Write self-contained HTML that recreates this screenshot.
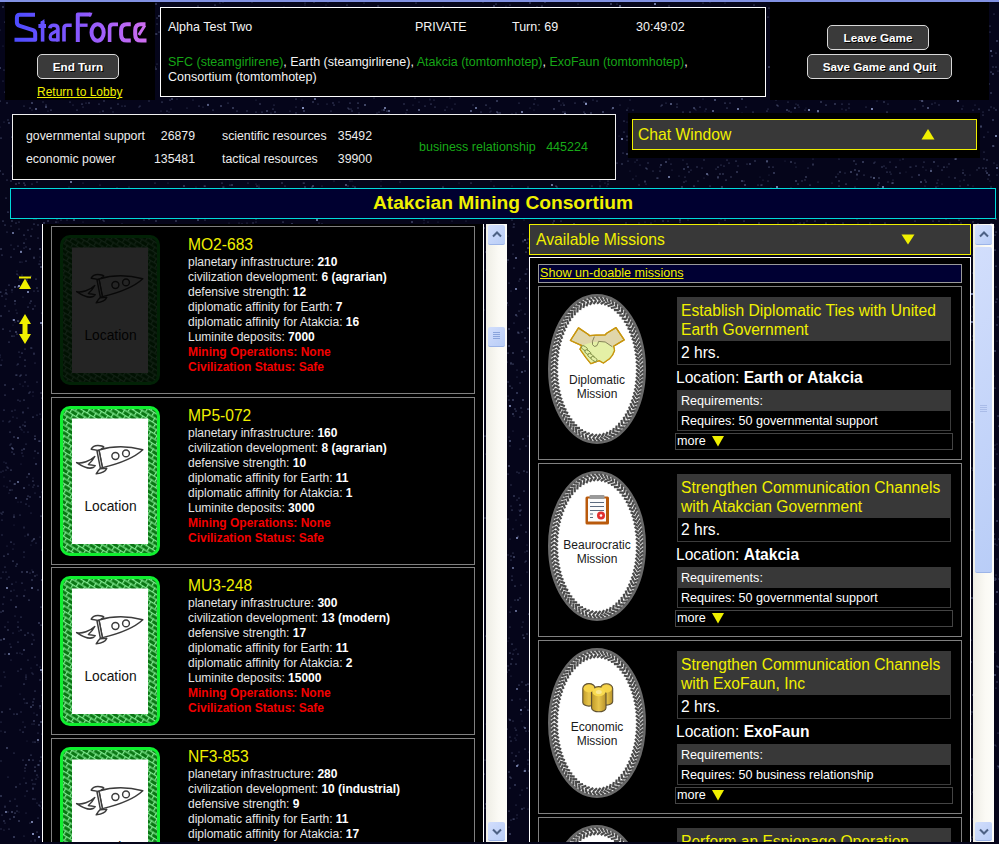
<!DOCTYPE html><html><head><meta charset="utf-8"><style>
*{box-sizing:border-box;margin:0;padding:0}
html,body{width:999px;height:844px;overflow:hidden;background:#05051a;font-family:"Liberation Sans",sans-serif;color:#fff}
.a{position:absolute;white-space:nowrap}
.blk{background:#000}
.topbar{left:0;top:0;width:999px;height:2px;background:#8191e3}
.btn{position:absolute;border:1px solid #d8d8d8;border-radius:5px;background:#3a3a3a;color:#fff;font-weight:bold;font-size:11.7px;text-align:center;text-shadow:1px 1px 0 #000}
.info{font-size:12.5px;color:#f4f4f4}
.g{color:#16a516}
.stat{font-size:12.3px;color:#ececec}
.sg{font-size:12.5px;color:#18aa18}
.yel{color:#f0f000}
.lp{font-size:12px;color:#e6e6e6;line-height:15px}
.lp b{color:#fff}
.lp .r{color:#f20000;font-weight:bold}
.frame{position:absolute;border:1px solid #808080;background:#000}
.sb{position:absolute;background:linear-gradient(90deg,#eeede5,#fbfaf5 60%,#fdfdf9)}
.sbb{position:absolute;width:17px;border-radius:2px;background:linear-gradient(135deg,#d2defc,#b9cdf7);border-bottom:1px solid #9cb4e8}
</style></head><body>

<svg width="0" height="0" style="position:absolute">
<defs>
<linearGradient id="lg" x1="14" y1="0" x2="147" y2="0" gradientUnits="userSpaceOnUse">
 <stop offset="0" stop-color="#4c4cff"/><stop offset="0.5" stop-color="#8a58ff"/><stop offset="1" stop-color="#d06ef0"/>
</linearGradient>
<pattern id="chev" width="7.5" height="9" patternUnits="userSpaceOnUse" patternTransform="rotate(32)">
 <rect width="7.5" height="9" fill="#0a7614"/><rect y="0" width="7.5" height="1.2" fill="#80ea90"/><rect y="4.5" width="7.5" height="1.2" fill="#80ea90"/><rect x="0" y="0" width="1.2" height="4.5" fill="#80ea90"/><rect x="3.75" y="4.5" width="1.2" height="4.5" fill="#80ea90"/>
</pattern>
<pattern id="gdash" width="6.6" height="7.6" patternUnits="userSpaceOnUse" patternTransform="rotate(50)">
 <rect width="6.6" height="7.6" fill="#484848"/><rect y="0" width="6.6" height="1.6" fill="#fff"/><rect y="3.8" width="6.6" height="1.6" fill="#fff"/><rect x="0" y="0" width="1.6" height="3.8" fill="#fff"/><rect x="3.3" y="3.8" width="1.6" height="3.8" fill="#fff"/>
</pattern>
<symbol id="rocket" viewBox="0 0 100 150">
 <g fill="#fff" stroke="#3c3c3c" stroke-width="1.45" stroke-linejoin="round">
  <path d="M16.6,56.6 C22,58 30,55 34.8,50.5 C33,54 30,57 28.4,58.5 C31,59 33.5,59.2 35.2,59.7 C33,63 27,63.5 16.6,56.6Z"/>
  <path d="M31.2,43.2 Q33.2,39.4 38,39.5 Q42.6,39.7 43.8,41 L39.4,44.6 Z"/>
  <path d="M36.2,67.8 Q38.6,63.8 40.2,62.7 L46.8,62.2 Q45.2,66.8 36.2,67.8 Z"/>
  <path d="M39,44.1 C52,40 66,39.5 82.8,43.7 C75,51 62,57 42.4,61.6 Z"/>
  <path d="M37,45 L39,44.1 L42.4,61.6 L40.4,62.4 Z"/>
  <circle cx="55.4" cy="49.9" r="3.5"/><circle cx="66" cy="47.4" r="3.4"/>
 </g>
</symbol>
<symbol id="card" viewBox="0 0 100 150">
 <rect x="1.5" y="1.5" width="97" height="147" rx="8.5" fill="url(#chev)" stroke="#10f030" stroke-width="3"/>
 <rect x="12" y="12.5" width="76" height="125.5" fill="#fff"/>
 <use href="#rocket" x="0" y="0" width="100" height="150"/>
 <text x="50.5" y="104.5" text-anchor="middle" font-family="Liberation Sans" font-size="13.8" fill="#111">Location</text>
</symbol>
<symbol id="oval" viewBox="0 0 98 150">
 <ellipse cx="49" cy="75" rx="47.5" ry="73.5" fill="#fff" stroke="#6a6a6a" stroke-width="3"/>
 <g fill="#4a4a4a"><rect x="-2.5" y="-1.1" width="5" height="2.2" transform="translate(93.6 75.0) rotate(135)"/><rect x="-2.5" y="-1.1" width="5" height="2.2" transform="translate(93.5 79.0) rotate(137)"/><rect x="-2.5" y="-1.1" width="5" height="2.2" transform="translate(93.3 83.0) rotate(139)"/><rect x="-2.5" y="-1.1" width="5" height="2.2" transform="translate(93.0 86.8) rotate(141)"/><rect x="-2.5" y="-1.1" width="5" height="2.2" transform="translate(92.5 90.7) rotate(143)"/><rect x="-2.5" y="-1.1" width="5" height="2.2" transform="translate(91.8 94.7) rotate(145)"/><rect x="-2.5" y="-1.1" width="5" height="2.2" transform="translate(91.1 98.5) rotate(148)"/><rect x="-2.5" y="-1.1" width="5" height="2.2" transform="translate(90.1 102.3) rotate(150)"/><rect x="-2.5" y="-1.1" width="5" height="2.2" transform="translate(89.0 106.2) rotate(152)"/><rect x="-2.5" y="-1.1" width="5" height="2.2" transform="translate(87.8 109.9) rotate(155)"/><rect x="-2.5" y="-1.1" width="5" height="2.2" transform="translate(86.4 113.6) rotate(157)"/><rect x="-2.5" y="-1.1" width="5" height="2.2" transform="translate(84.8 117.1) rotate(160)"/><rect x="-2.5" y="-1.1" width="5" height="2.2" transform="translate(83.0 120.7) rotate(163)"/><rect x="-2.5" y="-1.1" width="5" height="2.2" transform="translate(81.1 124.1) rotate(166)"/><rect x="-2.5" y="-1.1" width="5" height="2.2" transform="translate(78.9 127.4) rotate(170)"/><rect x="-2.5" y="-1.1" width="5" height="2.2" transform="translate(76.6 130.5) rotate(174)"/><rect x="-2.5" y="-1.1" width="5" height="2.2" transform="translate(74.0 133.5) rotate(178)"/><rect x="-2.5" y="-1.1" width="5" height="2.2" transform="translate(71.2 136.3) rotate(183)"/><rect x="-2.5" y="-1.1" width="5" height="2.2" transform="translate(68.1 138.8) rotate(188)"/><rect x="-2.5" y="-1.1" width="5" height="2.2" transform="translate(64.9 141.0) rotate(194)"/><rect x="-2.5" y="-1.1" width="5" height="2.2" transform="translate(61.4 142.8) rotate(200)"/><rect x="-2.5" y="-1.1" width="5" height="2.2" transform="translate(57.7 144.2) rotate(208)"/><rect x="-2.5" y="-1.1" width="5" height="2.2" transform="translate(53.9 145.2) rotate(215)"/><rect x="-2.5" y="-1.1" width="5" height="2.2" transform="translate(50.0 145.6) rotate(223)"/><rect x="-2.5" y="-1.1" width="5" height="2.2" transform="translate(46.1 145.4) rotate(-129)"/><rect x="-2.5" y="-1.1" width="5" height="2.2" transform="translate(42.2 144.8) rotate(-121)"/><rect x="-2.5" y="-1.1" width="5" height="2.2" transform="translate(38.4 143.6) rotate(-114)"/><rect x="-2.5" y="-1.1" width="5" height="2.2" transform="translate(34.8 141.9) rotate(-107)"/><rect x="-2.5" y="-1.1" width="5" height="2.2" transform="translate(31.5 139.9) rotate(-101)"/><rect x="-2.5" y="-1.1" width="5" height="2.2" transform="translate(28.3 137.5) rotate(-95)"/><rect x="-2.5" y="-1.1" width="5" height="2.2" transform="translate(25.4 134.9) rotate(-90)"/><rect x="-2.5" y="-1.1" width="5" height="2.2" transform="translate(22.7 132.0) rotate(-86)"/><rect x="-2.5" y="-1.1" width="5" height="2.2" transform="translate(20.2 129.0) rotate(-82)"/><rect x="-2.5" y="-1.1" width="5" height="2.2" transform="translate(18.0 125.7) rotate(-78)"/><rect x="-2.5" y="-1.1" width="5" height="2.2" transform="translate(15.9 122.4) rotate(-75)"/><rect x="-2.5" y="-1.1" width="5" height="2.2" transform="translate(14.1 118.9) rotate(-72)"/><rect x="-2.5" y="-1.1" width="5" height="2.2" transform="translate(12.4 115.3) rotate(-69)"/><rect x="-2.5" y="-1.1" width="5" height="2.2" transform="translate(10.9 111.7) rotate(-66)"/><rect x="-2.5" y="-1.1" width="5" height="2.2" transform="translate(9.6 107.9) rotate(-63)"/><rect x="-2.5" y="-1.1" width="5" height="2.2" transform="translate(8.4 104.2) rotate(-61)"/><rect x="-2.5" y="-1.1" width="5" height="2.2" transform="translate(7.4 100.4) rotate(-59)"/><rect x="-2.5" y="-1.1" width="5" height="2.2" transform="translate(6.5 96.5) rotate(-56)"/><rect x="-2.5" y="-1.1" width="5" height="2.2" transform="translate(5.8 92.7) rotate(-54)"/><rect x="-2.5" y="-1.1" width="5" height="2.2" transform="translate(5.3 88.8) rotate(-52)"/><rect x="-2.5" y="-1.1" width="5" height="2.2" transform="translate(4.8 84.8) rotate(-50)"/><rect x="-2.5" y="-1.1" width="5" height="2.2" transform="translate(4.6 80.9) rotate(-48)"/><rect x="-2.5" y="-1.1" width="5" height="2.2" transform="translate(4.4 77.0) rotate(-46)"/><rect x="-2.5" y="-1.1" width="5" height="2.2" transform="translate(4.4 73.0) rotate(-44)"/><rect x="-2.5" y="-1.1" width="5" height="2.2" transform="translate(4.6 69.1) rotate(-42)"/><rect x="-2.5" y="-1.1" width="5" height="2.2" transform="translate(4.8 65.2) rotate(-40)"/><rect x="-2.5" y="-1.1" width="5" height="2.2" transform="translate(5.3 61.2) rotate(-38)"/><rect x="-2.5" y="-1.1" width="5" height="2.2" transform="translate(5.8 57.3) rotate(-36)"/><rect x="-2.5" y="-1.1" width="5" height="2.2" transform="translate(6.5 53.5) rotate(-34)"/><rect x="-2.5" y="-1.1" width="5" height="2.2" transform="translate(7.4 49.6) rotate(-31)"/><rect x="-2.5" y="-1.1" width="5" height="2.2" transform="translate(8.4 45.8) rotate(-29)"/><rect x="-2.5" y="-1.1" width="5" height="2.2" transform="translate(9.6 42.1) rotate(-27)"/><rect x="-2.5" y="-1.1" width="5" height="2.2" transform="translate(10.9 38.3) rotate(-24)"/><rect x="-2.5" y="-1.1" width="5" height="2.2" transform="translate(12.4 34.7) rotate(-21)"/><rect x="-2.5" y="-1.1" width="5" height="2.2" transform="translate(14.1 31.1) rotate(-18)"/><rect x="-2.5" y="-1.1" width="5" height="2.2" transform="translate(15.9 27.6) rotate(-15)"/><rect x="-2.5" y="-1.1" width="5" height="2.2" transform="translate(18.0 24.3) rotate(-12)"/><rect x="-2.5" y="-1.1" width="5" height="2.2" transform="translate(20.2 21.1) rotate(-8)"/><rect x="-2.5" y="-1.1" width="5" height="2.2" transform="translate(22.7 18.0) rotate(-4)"/><rect x="-2.5" y="-1.1" width="5" height="2.2" transform="translate(25.3 15.2) rotate(0)"/><rect x="-2.5" y="-1.1" width="5" height="2.2" transform="translate(28.3 12.5) rotate(5)"/><rect x="-2.5" y="-1.1" width="5" height="2.2" transform="translate(31.4 10.1) rotate(11)"/><rect x="-2.5" y="-1.1" width="5" height="2.2" transform="translate(34.8 8.1) rotate(17)"/><rect x="-2.5" y="-1.1" width="5" height="2.2" transform="translate(38.4 6.4) rotate(24)"/><rect x="-2.5" y="-1.1" width="5" height="2.2" transform="translate(42.1 5.3) rotate(31)"/><rect x="-2.5" y="-1.1" width="5" height="2.2" transform="translate(46.0 4.6) rotate(39)"/><rect x="-2.5" y="-1.1" width="5" height="2.2" transform="translate(49.9 4.4) rotate(47)"/><rect x="-2.5" y="-1.1" width="5" height="2.2" transform="translate(53.8 4.8) rotate(55)"/><rect x="-2.5" y="-1.1" width="5" height="2.2" transform="translate(57.7 5.8) rotate(62)"/><rect x="-2.5" y="-1.1" width="5" height="2.2" transform="translate(61.4 7.2) rotate(70)"/><rect x="-2.5" y="-1.1" width="5" height="2.2" transform="translate(64.8 9.0) rotate(76)"/><rect x="-2.5" y="-1.1" width="5" height="2.2" transform="translate(68.1 11.2) rotate(82)"/><rect x="-2.5" y="-1.1" width="5" height="2.2" transform="translate(71.2 13.7) rotate(87)"/><rect x="-2.5" y="-1.1" width="5" height="2.2" transform="translate(74.0 16.5) rotate(92)"/><rect x="-2.5" y="-1.1" width="5" height="2.2" transform="translate(76.6 19.5) rotate(96)"/><rect x="-2.5" y="-1.1" width="5" height="2.2" transform="translate(78.9 22.6) rotate(100)"/><rect x="-2.5" y="-1.1" width="5" height="2.2" transform="translate(81.0 25.9) rotate(104)"/><rect x="-2.5" y="-1.1" width="5" height="2.2" transform="translate(83.0 29.3) rotate(107)"/><rect x="-2.5" y="-1.1" width="5" height="2.2" transform="translate(84.8 32.9) rotate(110)"/><rect x="-2.5" y="-1.1" width="5" height="2.2" transform="translate(86.4 36.4) rotate(113)"/><rect x="-2.5" y="-1.1" width="5" height="2.2" transform="translate(87.8 40.1) rotate(115)"/><rect x="-2.5" y="-1.1" width="5" height="2.2" transform="translate(89.0 43.8) rotate(118)"/><rect x="-2.5" y="-1.1" width="5" height="2.2" transform="translate(90.1 47.7) rotate(120)"/><rect x="-2.5" y="-1.1" width="5" height="2.2" transform="translate(91.1 51.5) rotate(122)"/><rect x="-2.5" y="-1.1" width="5" height="2.2" transform="translate(91.8 55.3) rotate(125)"/><rect x="-2.5" y="-1.1" width="5" height="2.2" transform="translate(92.5 59.3) rotate(127)"/><rect x="-2.5" y="-1.1" width="5" height="2.2" transform="translate(93.0 63.2) rotate(129)"/><rect x="-2.5" y="-1.1" width="5" height="2.2" transform="translate(93.3 67.0) rotate(131)"/><rect x="-2.5" y="-1.1" width="5" height="2.2" transform="translate(93.5 71.0) rotate(133)"/><rect x="-2.5" y="-1.1" width="5" height="2.2" transform="translate(90.0 77.0) rotate(46)"/><rect x="-2.5" y="-1.1" width="5" height="2.2" transform="translate(89.8 80.9) rotate(48)"/><rect x="-2.5" y="-1.1" width="5" height="2.2" transform="translate(89.6 84.9) rotate(50)"/><rect x="-2.5" y="-1.1" width="5" height="2.2" transform="translate(89.1 88.7) rotate(52)"/><rect x="-2.5" y="-1.1" width="5" height="2.2" transform="translate(88.6 92.6) rotate(54)"/><rect x="-2.5" y="-1.1" width="5" height="2.2" transform="translate(87.9 96.4) rotate(57)"/><rect x="-2.5" y="-1.1" width="5" height="2.2" transform="translate(87.0 100.3) rotate(59)"/><rect x="-2.5" y="-1.1" width="5" height="2.2" transform="translate(86.0 104.0) rotate(61)"/><rect x="-2.5" y="-1.1" width="5" height="2.2" transform="translate(84.8 107.7) rotate(64)"/><rect x="-2.5" y="-1.1" width="5" height="2.2" transform="translate(83.4 111.4) rotate(67)"/><rect x="-2.5" y="-1.1" width="5" height="2.2" transform="translate(81.9 115.0) rotate(69)"/><rect x="-2.5" y="-1.1" width="5" height="2.2" transform="translate(80.2 118.5) rotate(73)"/><rect x="-2.5" y="-1.1" width="5" height="2.2" transform="translate(78.3 121.9) rotate(76)"/><rect x="-2.5" y="-1.1" width="5" height="2.2" transform="translate(76.2 125.2) rotate(80)"/><rect x="-2.5" y="-1.1" width="5" height="2.2" transform="translate(73.8 128.3) rotate(84)"/><rect x="-2.5" y="-1.1" width="5" height="2.2" transform="translate(71.2 131.3) rotate(88)"/><rect x="-2.5" y="-1.1" width="5" height="2.2" transform="translate(68.4 134.0) rotate(94)"/><rect x="-2.5" y="-1.1" width="5" height="2.2" transform="translate(65.4 136.4) rotate(100)"/><rect x="-2.5" y="-1.1" width="5" height="2.2" transform="translate(62.1 138.5) rotate(106)"/><rect x="-2.5" y="-1.1" width="5" height="2.2" transform="translate(58.5 140.2) rotate(114)"/><rect x="-2.5" y="-1.1" width="5" height="2.2" transform="translate(54.8 141.3) rotate(122)"/><rect x="-2.5" y="-1.1" width="5" height="2.2" transform="translate(50.9 141.9) rotate(131)"/><rect x="-2.5" y="-1.1" width="5" height="2.2" transform="translate(47.1 141.9) rotate(-221)"/><rect x="-2.5" y="-1.1" width="5" height="2.2" transform="translate(43.2 141.3) rotate(-212)"/><rect x="-2.5" y="-1.1" width="5" height="2.2" transform="translate(39.4 140.1) rotate(-204)"/><rect x="-2.5" y="-1.1" width="5" height="2.2" transform="translate(35.9 138.5) rotate(-196)"/><rect x="-2.5" y="-1.1" width="5" height="2.2" transform="translate(32.6 136.4) rotate(-190)"/><rect x="-2.5" y="-1.1" width="5" height="2.2" transform="translate(29.5 134.0) rotate(-184)"/><rect x="-2.5" y="-1.1" width="5" height="2.2" transform="translate(26.7 131.2) rotate(-178)"/><rect x="-2.5" y="-1.1" width="5" height="2.2" transform="translate(24.2 128.3) rotate(-174)"/><rect x="-2.5" y="-1.1" width="5" height="2.2" transform="translate(21.8 125.2) rotate(-170)"/><rect x="-2.5" y="-1.1" width="5" height="2.2" transform="translate(19.7 121.9) rotate(-166)"/><rect x="-2.5" y="-1.1" width="5" height="2.2" transform="translate(17.8 118.4) rotate(-163)"/><rect x="-2.5" y="-1.1" width="5" height="2.2" transform="translate(16.1 115.0) rotate(-159)"/><rect x="-2.5" y="-1.1" width="5" height="2.2" transform="translate(14.6 111.3) rotate(-157)"/><rect x="-2.5" y="-1.1" width="5" height="2.2" transform="translate(13.2 107.6) rotate(-154)"/><rect x="-2.5" y="-1.1" width="5" height="2.2" transform="translate(12.0 103.9) rotate(-151)"/><rect x="-2.5" y="-1.1" width="5" height="2.2" transform="translate(11.0 100.2) rotate(-149)"/><rect x="-2.5" y="-1.1" width="5" height="2.2" transform="translate(10.1 96.4) rotate(-147)"/><rect x="-2.5" y="-1.1" width="5" height="2.2" transform="translate(9.4 92.5) rotate(-144)"/><rect x="-2.5" y="-1.1" width="5" height="2.2" transform="translate(8.9 88.7) rotate(-142)"/><rect x="-2.5" y="-1.1" width="5" height="2.2" transform="translate(8.4 84.8) rotate(-140)"/><rect x="-2.5" y="-1.1" width="5" height="2.2" transform="translate(8.2 80.9) rotate(-138)"/><rect x="-2.5" y="-1.1" width="5" height="2.2" transform="translate(8.0 77.0) rotate(-136)"/><rect x="-2.5" y="-1.1" width="5" height="2.2" transform="translate(8.0 73.0) rotate(-134)"/><rect x="-2.5" y="-1.1" width="5" height="2.2" transform="translate(8.2 69.1) rotate(-132)"/><rect x="-2.5" y="-1.1" width="5" height="2.2" transform="translate(8.4 65.2) rotate(-130)"/><rect x="-2.5" y="-1.1" width="5" height="2.2" transform="translate(8.9 61.3) rotate(-128)"/><rect x="-2.5" y="-1.1" width="5" height="2.2" transform="translate(9.4 57.5) rotate(-126)"/><rect x="-2.5" y="-1.1" width="5" height="2.2" transform="translate(10.1 53.6) rotate(-123)"/><rect x="-2.5" y="-1.1" width="5" height="2.2" transform="translate(11.0 49.8) rotate(-121)"/><rect x="-2.5" y="-1.1" width="5" height="2.2" transform="translate(12.0 46.1) rotate(-119)"/><rect x="-2.5" y="-1.1" width="5" height="2.2" transform="translate(13.2 42.4) rotate(-116)"/><rect x="-2.5" y="-1.1" width="5" height="2.2" transform="translate(14.6 38.7) rotate(-113)"/><rect x="-2.5" y="-1.1" width="5" height="2.2" transform="translate(16.1 35.0) rotate(-111)"/><rect x="-2.5" y="-1.1" width="5" height="2.2" transform="translate(17.8 31.6) rotate(-107)"/><rect x="-2.5" y="-1.1" width="5" height="2.2" transform="translate(19.7 28.1) rotate(-104)"/><rect x="-2.5" y="-1.1" width="5" height="2.2" transform="translate(21.8 24.8) rotate(-100)"/><rect x="-2.5" y="-1.1" width="5" height="2.2" transform="translate(24.1 21.7) rotate(-96)"/><rect x="-2.5" y="-1.1" width="5" height="2.2" transform="translate(26.7 18.8) rotate(-92)"/><rect x="-2.5" y="-1.1" width="5" height="2.2" transform="translate(29.5 16.0) rotate(-86)"/><rect x="-2.5" y="-1.1" width="5" height="2.2" transform="translate(32.6 13.6) rotate(-80)"/><rect x="-2.5" y="-1.1" width="5" height="2.2" transform="translate(35.9 11.5) rotate(-74)"/><rect x="-2.5" y="-1.1" width="5" height="2.2" transform="translate(39.4 9.9) rotate(-66)"/><rect x="-2.5" y="-1.1" width="5" height="2.2" transform="translate(43.2 8.7) rotate(-58)"/><rect x="-2.5" y="-1.1" width="5" height="2.2" transform="translate(47.0 8.1) rotate(-50)"/><rect x="-2.5" y="-1.1" width="5" height="2.2" transform="translate(50.9 8.1) rotate(-41)"/><rect x="-2.5" y="-1.1" width="5" height="2.2" transform="translate(54.8 8.7) rotate(-32)"/><rect x="-2.5" y="-1.1" width="5" height="2.2" transform="translate(58.5 9.8) rotate(-24)"/><rect x="-2.5" y="-1.1" width="5" height="2.2" transform="translate(62.0 11.5) rotate(-16)"/><rect x="-2.5" y="-1.1" width="5" height="2.2" transform="translate(65.3 13.6) rotate(-10)"/><rect x="-2.5" y="-1.1" width="5" height="2.2" transform="translate(68.4 16.0) rotate(-4)"/><rect x="-2.5" y="-1.1" width="5" height="2.2" transform="translate(71.2 18.7) rotate(2)"/><rect x="-2.5" y="-1.1" width="5" height="2.2" transform="translate(73.8 21.7) rotate(6)"/><rect x="-2.5" y="-1.1" width="5" height="2.2" transform="translate(76.2 24.8) rotate(10)"/><rect x="-2.5" y="-1.1" width="5" height="2.2" transform="translate(78.3 28.1) rotate(14)"/><rect x="-2.5" y="-1.1" width="5" height="2.2" transform="translate(80.2 31.5) rotate(17)"/><rect x="-2.5" y="-1.1" width="5" height="2.2" transform="translate(81.9 35.0) rotate(21)"/><rect x="-2.5" y="-1.1" width="5" height="2.2" transform="translate(83.4 38.6) rotate(23)"/><rect x="-2.5" y="-1.1" width="5" height="2.2" transform="translate(84.8 42.3) rotate(26)"/><rect x="-2.5" y="-1.1" width="5" height="2.2" transform="translate(86.0 46.0) rotate(29)"/><rect x="-2.5" y="-1.1" width="5" height="2.2" transform="translate(87.0 49.7) rotate(31)"/><rect x="-2.5" y="-1.1" width="5" height="2.2" transform="translate(87.9 53.6) rotate(33)"/><rect x="-2.5" y="-1.1" width="5" height="2.2" transform="translate(88.6 57.4) rotate(36)"/><rect x="-2.5" y="-1.1" width="5" height="2.2" transform="translate(89.1 61.3) rotate(38)"/><rect x="-2.5" y="-1.1" width="5" height="2.2" transform="translate(89.6 65.1) rotate(40)"/><rect x="-2.5" y="-1.1" width="5" height="2.2" transform="translate(89.8 69.1) rotate(42)"/><rect x="-2.5" y="-1.1" width="5" height="2.2" transform="translate(90.0 73.0) rotate(44)"/></g>
</symbol>
</defs>
</svg>

<svg width="999" height="844" viewBox="0 0 999 844" style="position:absolute;left:0;top:0" fill="#b8c8ff"><circle cx="29" cy="393" r="0.5" fill-opacity="0.7"/><circle cx="871" cy="177" r="0.55" fill-opacity="0.69"/><circle cx="3" cy="572" r="0.6" fill-opacity="0.43"/><circle cx="512" cy="753" r="0.7" fill-opacity="0.3"/><circle cx="996" cy="136" r="1" fill-opacity="0.79"/><circle cx="33" cy="417" r="0.55" fill-opacity="0.74"/><circle cx="563" cy="112" r="0.7" fill-opacity="0.3"/><circle cx="453" cy="843" r="0.7" fill-opacity="0.73"/><circle cx="34" cy="258" r="0.6" fill-opacity="0.67"/><circle cx="979" cy="168" r="0.7" fill-opacity="0.39"/><circle cx="623" cy="153" r="0.55" fill-opacity="0.57"/><circle cx="42" cy="398" r="0.5" fill-opacity="0.7"/><circle cx="351" cy="109" r="0.6" fill-opacity="0.48"/><circle cx="24" cy="557" r="0.55" fill-opacity="0.4"/><circle cx="13" cy="449" r="0.7" fill-opacity="0.64"/><circle cx="997" cy="592" r="0.8" fill-opacity="0.68"/><circle cx="516" cy="113" r="0.6" fill-opacity="0.48"/><circle cx="389" cy="111" r="0.9" fill-opacity="0.63"/><circle cx="517" cy="500" r="0.55" fill-opacity="0.45"/><circle cx="32" cy="780" r="0.5" fill-opacity="0.59"/><circle cx="973" cy="307" r="0.7" fill-opacity="0.43"/><circle cx="33" cy="705" r="0.6" fill-opacity="0.72"/><circle cx="949" cy="164" r="0.7" fill-opacity="0.34"/><circle cx="984" cy="137" r="0.55" fill-opacity="0.56"/><circle cx="522" cy="112" r="0.9" fill-opacity="0.84"/><circle cx="891" cy="844" r="0.55" fill-opacity="0.41"/><circle cx="382" cy="110" r="0.55" fill-opacity="0.32"/><circle cx="34" cy="458" r="0.5" fill-opacity="0.26"/><circle cx="51" cy="110" r="0.6" fill-opacity="0.72"/><circle cx="33" cy="487" r="0.6" fill-opacity="0.45"/><circle cx="10" cy="432" r="0.55" fill-opacity="0.66"/><circle cx="22" cy="572" r="0.7" fill-opacity="0.5"/><circle cx="769" cy="175" r="0.5" fill-opacity="0.29"/><circle cx="516" cy="756" r="0.7" fill-opacity="0.45"/><circle cx="3" cy="329" r="0.55" fill-opacity="0.71"/><circle cx="528" cy="764" r="0.6" fill-opacity="0.29"/><circle cx="813" cy="165" r="0.55" fill-opacity="0.48"/><circle cx="296" cy="99" r="0.6" fill-opacity="0.63"/><circle cx="452" cy="109" r="0.55" fill-opacity="0.43"/><circle cx="24" cy="650" r="0.7" fill-opacity="0.71"/><circle cx="378" cy="843" r="0.6" fill-opacity="0.32"/><circle cx="971" cy="839" r="0.7" fill-opacity="0.35"/><circle cx="2" cy="535" r="0.7" fill-opacity="0.29"/><circle cx="334" cy="181" r="0.5" fill-opacity="0.39"/><circle cx="13" cy="325" r="0.5" fill-opacity="0.25"/><circle cx="21" cy="251" r="0.5" fill-opacity="0.71"/><circle cx="528" cy="328" r="0.6" fill-opacity="0.66"/><circle cx="4" cy="477" r="0.5" fill-opacity="0.28"/><circle cx="40" cy="497" r="0.7" fill-opacity="0.56"/><circle cx="1" cy="640" r="0.7" fill-opacity="0.48"/><circle cx="155" cy="183" r="0.55" fill-opacity="0.48"/><circle cx="518" cy="333" r="0.7" fill-opacity="0.33"/><circle cx="516" cy="411" r="0.5" fill-opacity="0.73"/><circle cx="971" cy="324" r="0.6" fill-opacity="0.3"/><circle cx="337" cy="843" r="0.5" fill-opacity="0.4"/><circle cx="27" cy="477" r="0.5" fill-opacity="0.59"/><circle cx="24" cy="488" r="0.7" fill-opacity="0.69"/><circle cx="521" cy="510" r="0.5" fill-opacity="0.69"/><circle cx="1" cy="796" r="0.7" fill-opacity="0.58"/><circle cx="61" cy="220" r="0.55" fill-opacity="0.46"/><circle cx="851" cy="172" r="0.7" fill-opacity="0.74"/><circle cx="220" cy="3" r="0.6" fill-opacity="0.34"/><circle cx="627" cy="154" r="0.7" fill-opacity="0.72"/><circle cx="885" cy="223" r="0.6" fill-opacity="0.55"/><circle cx="677" cy="104" r="0.5" fill-opacity="0.63"/><circle cx="879" cy="183" r="0.7" fill-opacity="0.39"/><circle cx="510" cy="720" r="0.7" fill-opacity="0.67"/><circle cx="996" cy="110" r="0.7" fill-opacity="0.43"/><circle cx="9" cy="577" r="0.55" fill-opacity="0.56"/><circle cx="35" cy="691" r="0.55" fill-opacity="0.6"/><circle cx="942" cy="184" r="0.5" fill-opacity="0.39"/><circle cx="36" cy="219" r="0.5" fill-opacity="0.62"/><circle cx="7" cy="588" r="0.9" fill-opacity="0.78"/><circle cx="646" cy="184" r="0.55" fill-opacity="0.35"/><circle cx="920" cy="100" r="0.7" fill-opacity="0.36"/><circle cx="710" cy="186" r="0.5" fill-opacity="0.64"/><circle cx="0" cy="101" r="0.6" fill-opacity="0.39"/><circle cx="525" cy="330" r="0.5" fill-opacity="0.25"/><circle cx="520" cy="383" r="0.7" fill-opacity="0.3"/><circle cx="991" cy="93" r="0.7" fill-opacity="0.51"/><circle cx="521" cy="310" r="0.5" fill-opacity="0.26"/><circle cx="517" cy="735" r="0.6" fill-opacity="0.37"/><circle cx="516" cy="315" r="0.7" fill-opacity="0.67"/><circle cx="114" cy="843" r="0.7" fill-opacity="0.31"/><circle cx="37" cy="803" r="0.6" fill-opacity="0.33"/><circle cx="26" cy="675" r="0.5" fill-opacity="0.46"/><circle cx="157" cy="18" r="0.6" fill-opacity="0.6"/><circle cx="525" cy="562" r="0.6" fill-opacity="0.39"/><circle cx="322" cy="224" r="0.6" fill-opacity="0.58"/><circle cx="655" cy="221" r="0.5" fill-opacity="0.29"/><circle cx="359" cy="113" r="0.5" fill-opacity="0.49"/><circle cx="575" cy="103" r="0.55" fill-opacity="0.54"/><circle cx="349" cy="109" r="0.55" fill-opacity="0.63"/><circle cx="387" cy="111" r="0.55" fill-opacity="0.7"/><circle cx="484" cy="310" r="0.7" fill-opacity="0.26"/><circle cx="33" cy="635" r="0.6" fill-opacity="0.54"/><circle cx="998" cy="71" r="0.6" fill-opacity="0.38"/><circle cx="592" cy="186" r="0.55" fill-opacity="0.55"/><circle cx="1" cy="316" r="0.7" fill-opacity="0.5"/><circle cx="22" cy="275" r="0.5" fill-opacity="0.49"/><circle cx="19" cy="631" r="0.55" fill-opacity="0.32"/><circle cx="915" cy="221" r="0.5" fill-opacity="0.6"/><circle cx="995" cy="675" r="0.7" fill-opacity="0.73"/><circle cx="122" cy="106" r="0.6" fill-opacity="0.38"/><circle cx="5" cy="395" r="0.6" fill-opacity="0.59"/><circle cx="998" cy="667" r="0.7" fill-opacity="0.44"/><circle cx="769" cy="67" r="0.7" fill-opacity="0.66"/><circle cx="997" cy="165" r="0.55" fill-opacity="0.38"/><circle cx="915" cy="109" r="0.6" fill-opacity="0.64"/><circle cx="680" cy="220" r="0.7" fill-opacity="0.61"/><circle cx="526" cy="731" r="0.6" fill-opacity="0.55"/><circle cx="1" cy="249" r="0.7" fill-opacity="0.56"/><circle cx="924" cy="162" r="0.6" fill-opacity="0.5"/><circle cx="995" cy="351" r="0.7" fill-opacity="0.68"/><circle cx="497" cy="112" r="0.7" fill-opacity="0.59"/><circle cx="507" cy="362" r="0.5" fill-opacity="0.59"/><circle cx="18" cy="287" r="0.7" fill-opacity="0.52"/><circle cx="694" cy="186" r="0.55" fill-opacity="0.75"/><circle cx="32" cy="541" r="0.6" fill-opacity="0.5"/><circle cx="718" cy="167" r="0.6" fill-opacity="0.68"/><circle cx="350" cy="103" r="0.6" fill-opacity="0.6"/><circle cx="921" cy="182" r="0.8" fill-opacity="0.68"/><circle cx="542" cy="6" r="0.55" fill-opacity="0.71"/><circle cx="27" cy="572" r="0.7" fill-opacity="0.68"/><circle cx="639" cy="185" r="0.7" fill-opacity="0.33"/><circle cx="683" cy="160" r="0.55" fill-opacity="0.35"/><circle cx="292" cy="224" r="0.7" fill-opacity="0.64"/><circle cx="721" cy="219" r="0.7" fill-opacity="0.3"/><circle cx="407" cy="110" r="0.55" fill-opacity="0.71"/><circle cx="785" cy="161" r="0.5" fill-opacity="0.27"/><circle cx="17" cy="806" r="0.5" fill-opacity="0.7"/><circle cx="38" cy="765" r="0.7" fill-opacity="0.47"/><circle cx="507" cy="262" r="0.6" fill-opacity="0.3"/><circle cx="16" cy="582" r="0.6" fill-opacity="0.26"/><circle cx="7" cy="103" r="0.7" fill-opacity="0.43"/><circle cx="14" cy="515" r="0.5" fill-opacity="0.48"/><circle cx="522" cy="332" r="0.6" fill-opacity="0.65"/><circle cx="996" cy="67" r="0.5" fill-opacity="0.72"/><circle cx="874" cy="163" r="0.6" fill-opacity="0.54"/><circle cx="11" cy="591" r="0.55" fill-opacity="0.58"/><circle cx="508" cy="555" r="0.7" fill-opacity="0.27"/><circle cx="38" cy="777" r="0.6" fill-opacity="0.29"/><circle cx="14" cy="517" r="0.7" fill-opacity="0.55"/><circle cx="31" cy="707" r="0.7" fill-opacity="0.67"/><circle cx="826" cy="223" r="0.6" fill-opacity="0.68"/><circle cx="884" cy="102" r="0.7" fill-opacity="0.47"/><circle cx="430" cy="99" r="0.6" fill-opacity="0.29"/><circle cx="159" cy="32" r="0.6" fill-opacity="0.62"/><circle cx="25" cy="349" r="0.55" fill-opacity="0.52"/><circle cx="981" cy="126" r="0.7" fill-opacity="0.43"/><circle cx="35" cy="363" r="0.55" fill-opacity="0.39"/><circle cx="877" cy="101" r="0.55" fill-opacity="0.36"/><circle cx="514" cy="557" r="0.7" fill-opacity="0.74"/><circle cx="983" cy="168" r="0.6" fill-opacity="0.63"/><circle cx="710" cy="2" r="0.5" fill-opacity="0.43"/><circle cx="415" cy="98" r="0.55" fill-opacity="0.49"/><circle cx="0" cy="30" r="0.5" fill-opacity="0.42"/><circle cx="510" cy="612" r="0.6" fill-opacity="0.51"/><circle cx="661" cy="106" r="0.6" fill-opacity="0.46"/><circle cx="694" cy="108" r="0.7" fill-opacity="0.7"/><circle cx="523" cy="242" r="0.6" fill-opacity="0.26"/><circle cx="24" cy="528" r="0.5" fill-opacity="0.35"/><circle cx="7" cy="748" r="0.7" fill-opacity="0.72"/><circle cx="760" cy="177" r="0.5" fill-opacity="0.25"/><circle cx="35" cy="784" r="0.5" fill-opacity="0.57"/><circle cx="939" cy="105" r="0.7" fill-opacity="0.33"/><circle cx="955" cy="178" r="0.7" fill-opacity="0.44"/><circle cx="996" cy="575" r="0.55" fill-opacity="0.48"/><circle cx="515" cy="785" r="0.7" fill-opacity="0.6"/><circle cx="513" cy="245" r="0.6" fill-opacity="0.6"/><circle cx="506" cy="6" r="0.55" fill-opacity="0.25"/><circle cx="486" cy="105" r="0.6" fill-opacity="0.67"/><circle cx="430" cy="100" r="0.5" fill-opacity="0.26"/><circle cx="67" cy="220" r="0.5" fill-opacity="0.45"/><circle cx="4" cy="556" r="0.6" fill-opacity="0.69"/><circle cx="526" cy="685" r="0.7" fill-opacity="0.51"/><circle cx="41" cy="393" r="0.7" fill-opacity="0.44"/><circle cx="10" cy="801" r="0.6" fill-opacity="0.58"/><circle cx="38" cy="818" r="0.5" fill-opacity="0.57"/><circle cx="20" cy="401" r="0.55" fill-opacity="0.45"/><circle cx="515" cy="586" r="0.55" fill-opacity="0.71"/><circle cx="19" cy="229" r="0.6" fill-opacity="0.41"/><circle cx="28" cy="534" r="0.55" fill-opacity="0.46"/><circle cx="256" cy="100" r="0.5" fill-opacity="0.36"/><circle cx="529" cy="771" r="0.7" fill-opacity="0.4"/><circle cx="7" cy="467" r="0.5" fill-opacity="0.55"/><circle cx="8" cy="777" r="0.6" fill-opacity="0.38"/><circle cx="20" cy="784" r="0.5" fill-opacity="0.47"/><circle cx="527" cy="342" r="0.7" fill-opacity="0.36"/><circle cx="17" cy="653" r="0.55" fill-opacity="0.52"/><circle cx="993" cy="146" r="0.7" fill-opacity="0.75"/><circle cx="9" cy="285" r="0.6" fill-opacity="0.59"/><circle cx="891" cy="174" r="0.55" fill-opacity="0.44"/><circle cx="6" cy="463" r="0.5" fill-opacity="0.52"/><circle cx="319" cy="223" r="0.5" fill-opacity="0.48"/><circle cx="702" cy="168" r="0.55" fill-opacity="0.43"/><circle cx="627" cy="140" r="0.55" fill-opacity="0.47"/><circle cx="253" cy="223" r="0.7" fill-opacity="0.38"/><circle cx="15" cy="304" r="0.7" fill-opacity="0.27"/><circle cx="639" cy="223" r="0.6" fill-opacity="0.39"/><circle cx="25" cy="768" r="0.5" fill-opacity="0.61"/><circle cx="27" cy="280" r="0.55" fill-opacity="0.63"/><circle cx="971" cy="714" r="0.6" fill-opacity="0.46"/><circle cx="31" cy="755" r="0.6" fill-opacity="0.58"/><circle cx="151" cy="842" r="0.55" fill-opacity="0.36"/><circle cx="172" cy="99" r="0.7" fill-opacity="0.74"/><circle cx="171" cy="109" r="0.6" fill-opacity="0.35"/><circle cx="791" cy="188" r="0.6" fill-opacity="0.41"/><circle cx="19" cy="352" r="0.6" fill-opacity="0.46"/><circle cx="385" cy="108" r="1" fill-opacity="0.74"/><circle cx="282" cy="183" r="0.7" fill-opacity="0.48"/><circle cx="33" cy="396" r="0.5" fill-opacity="0.31"/><circle cx="893" cy="183" r="0.7" fill-opacity="0.5"/><circle cx="973" cy="186" r="0.5" fill-opacity="0.31"/><circle cx="513" cy="529" r="0.55" fill-opacity="0.47"/><circle cx="507" cy="672" r="0.6" fill-opacity="0.48"/><circle cx="630" cy="100" r="0.55" fill-opacity="0.4"/><circle cx="7" cy="180" r="0.5" fill-opacity="0.6"/><circle cx="10" cy="481" r="0.7" fill-opacity="0.37"/><circle cx="40" cy="706" r="0.7" fill-opacity="0.52"/><circle cx="900" cy="160" r="0.5" fill-opacity="0.31"/><circle cx="509" cy="400" r="0.55" fill-opacity="0.62"/><circle cx="713" cy="111" r="0.8" fill-opacity="0.95"/><circle cx="999" cy="539" r="0.55" fill-opacity="0.63"/><circle cx="534" cy="104" r="0.55" fill-opacity="0.57"/><circle cx="4" cy="830" r="0.6" fill-opacity="0.34"/><circle cx="973" cy="695" r="0.7" fill-opacity="0.55"/><circle cx="39" cy="264" r="0.5" fill-opacity="0.51"/><circle cx="20" cy="653" r="0.5" fill-opacity="0.37"/><circle cx="518" cy="536" r="0.6" fill-opacity="0.31"/><circle cx="854" cy="161" r="0.7" fill-opacity="0.45"/><circle cx="708" cy="175" r="0.7" fill-opacity="0.35"/><circle cx="527" cy="788" r="0.55" fill-opacity="0.73"/><circle cx="419" cy="102" r="0.6" fill-opacity="0.28"/><circle cx="28" cy="408" r="0.5" fill-opacity="0.55"/><circle cx="2" cy="255" r="0.5" fill-opacity="0.66"/><circle cx="525" cy="240" r="0.8" fill-opacity="0.9"/><circle cx="972" cy="322" r="0.9" fill-opacity="0.83"/><circle cx="789" cy="111" r="0.55" fill-opacity="0.63"/><circle cx="1" cy="761" r="0.7" fill-opacity="0.29"/><circle cx="971" cy="316" r="0.5" fill-opacity="0.43"/><circle cx="628" cy="161" r="0.55" fill-opacity="0.5"/><circle cx="510" cy="737" r="0.55" fill-opacity="0.53"/><circle cx="12" cy="452" r="0.55" fill-opacity="0.56"/><circle cx="42" cy="808" r="0.55" fill-opacity="0.51"/><circle cx="18" cy="642" r="0.55" fill-opacity="0.56"/><circle cx="866" cy="107" r="0.5" fill-opacity="0.48"/><circle cx="11" cy="226" r="0.55" fill-opacity="0.47"/><circle cx="999" cy="579" r="0.7" fill-opacity="0.35"/><circle cx="33" cy="478" r="0.5" fill-opacity="0.3"/><circle cx="35" cy="493" r="0.5" fill-opacity="0.43"/><circle cx="4" cy="821" r="0.7" fill-opacity="0.48"/><circle cx="486" cy="252" r="0.7" fill-opacity="0.45"/><circle cx="718" cy="843" r="0.55" fill-opacity="0.27"/><circle cx="17" cy="596" r="0.7" fill-opacity="0.33"/><circle cx="30" cy="823" r="0.5" fill-opacity="0.54"/><circle cx="257" cy="186" r="0.6" fill-opacity="0.68"/><circle cx="521" cy="525" r="0.6" fill-opacity="0.5"/><circle cx="698" cy="181" r="0.55" fill-opacity="0.5"/><circle cx="25" cy="635" r="0.6" fill-opacity="0.67"/><circle cx="413" cy="105" r="0.5" fill-opacity="0.36"/><circle cx="511" cy="664" r="0.7" fill-opacity="0.47"/><circle cx="525" cy="771" r="1" fill-opacity="0.67"/><circle cx="651" cy="223" r="0.5" fill-opacity="0.54"/><circle cx="30" cy="249" r="0.7" fill-opacity="0.6"/><circle cx="26" cy="813" r="0.55" fill-opacity="0.35"/><circle cx="509" cy="638" r="0.5" fill-opacity="0.39"/><circle cx="322" cy="186" r="0.6" fill-opacity="0.31"/><circle cx="509" cy="827" r="0.6" fill-opacity="0.37"/><circle cx="722" cy="187" r="0.7" fill-opacity="0.6"/><circle cx="925" cy="186" r="0.6" fill-opacity="0.34"/><circle cx="527" cy="269" r="0.5" fill-opacity="0.59"/><circle cx="528" cy="187" r="0.55" fill-opacity="0.57"/><circle cx="352" cy="181" r="0.55" fill-opacity="0.27"/><circle cx="35" cy="742" r="0.6" fill-opacity="0.6"/><circle cx="679" cy="176" r="0.5" fill-opacity="0.39"/><circle cx="16" cy="787" r="0.7" fill-opacity="0.5"/><circle cx="716" cy="169" r="0.5" fill-opacity="0.49"/><circle cx="471" cy="843" r="0.7" fill-opacity="0.46"/><circle cx="33" cy="784" r="0.7" fill-opacity="0.29"/><circle cx="521" cy="408" r="0.7" fill-opacity="0.43"/><circle cx="768" cy="17" r="0.55" fill-opacity="0.57"/><circle cx="524" cy="491" r="0.55" fill-opacity="0.67"/><circle cx="37" cy="182" r="0.5" fill-opacity="0.62"/><circle cx="514" cy="323" r="0.6" fill-opacity="0.4"/><circle cx="32" cy="580" r="0.7" fill-opacity="0.49"/><circle cx="513" cy="400" r="0.7" fill-opacity="0.66"/><circle cx="34" cy="353" r="0.6" fill-opacity="0.37"/><circle cx="237" cy="111" r="0.5" fill-opacity="0.68"/><circle cx="795" cy="108" r="0.7" fill-opacity="0.69"/><circle cx="965" cy="175" r="0.6" fill-opacity="0.49"/><circle cx="510" cy="539" r="0.5" fill-opacity="0.41"/><circle cx="806" cy="108" r="0.5" fill-opacity="0.26"/><circle cx="516" cy="611" r="0.9" fill-opacity="0.71"/><circle cx="537" cy="7" r="0.5" fill-opacity="0.72"/><circle cx="512" cy="388" r="0.5" fill-opacity="0.75"/><circle cx="6" cy="290" r="0.7" fill-opacity="0.35"/><circle cx="526" cy="298" r="0.6" fill-opacity="0.43"/><circle cx="44" cy="223" r="0.7" fill-opacity="0.59"/><circle cx="157" cy="34" r="0.5" fill-opacity="0.4"/><circle cx="17" cy="271" r="0.55" fill-opacity="0.28"/><circle cx="526" cy="561" r="0.55" fill-opacity="0.59"/><circle cx="517" cy="815" r="0.7" fill-opacity="0.26"/><circle cx="994" cy="146" r="0.55" fill-opacity="0.41"/><circle cx="737" cy="172" r="0.7" fill-opacity="0.59"/><circle cx="28" cy="432" r="0.5" fill-opacity="0.48"/><circle cx="284" cy="7" r="0.6" fill-opacity="0.35"/><circle cx="849" cy="108" r="0.6" fill-opacity="0.42"/><circle cx="35" cy="451" r="0.55" fill-opacity="0.63"/><circle cx="515" cy="409" r="0.7" fill-opacity="0.42"/><circle cx="919" cy="175" r="0.7" fill-opacity="0.63"/><circle cx="162" cy="102" r="0.5" fill-opacity="0.73"/><circle cx="31" cy="513" r="0.5" fill-opacity="0.4"/><circle cx="24" cy="106" r="0.6" fill-opacity="0.46"/><circle cx="11" cy="542" r="0.6" fill-opacity="0.68"/><circle cx="989" cy="84" r="0.7" fill-opacity="0.42"/><circle cx="32" cy="588" r="0.8" fill-opacity="0.94"/><circle cx="821" cy="102" r="0.7" fill-opacity="0.55"/><circle cx="530" cy="3" r="0.7" fill-opacity="0.55"/><circle cx="16" cy="310" r="0.6" fill-opacity="0.26"/><circle cx="510" cy="777" r="0.5" fill-opacity="0.75"/><circle cx="991" cy="224" r="0.7" fill-opacity="0.56"/><circle cx="736" cy="161" r="0.55" fill-opacity="0.64"/><circle cx="622" cy="139" r="0.9" fill-opacity="0.89"/><circle cx="26" cy="677" r="0.55" fill-opacity="0.63"/><circle cx="514" cy="819" r="0.55" fill-opacity="0.71"/><circle cx="41" cy="802" r="0.5" fill-opacity="0.29"/><circle cx="813" cy="164" r="0.55" fill-opacity="0.56"/><circle cx="522" cy="372" r="0.8" fill-opacity="0.7"/><circle cx="565" cy="114" r="0.9" fill-opacity="0.79"/><circle cx="25" cy="727" r="0.55" fill-opacity="0.58"/><circle cx="35" cy="439" r="0.7" fill-opacity="0.65"/><circle cx="48" cy="111" r="0.6" fill-opacity="0.32"/><circle cx="104" cy="221" r="0.5" fill-opacity="0.72"/><circle cx="33" cy="481" r="0.6" fill-opacity="0.66"/><circle cx="660" cy="167" r="0.6" fill-opacity="0.32"/><circle cx="939" cy="221" r="0.5" fill-opacity="0.59"/><circle cx="40" cy="257" r="0.6" fill-opacity="0.29"/><circle cx="83" cy="183" r="0.55" fill-opacity="0.33"/><circle cx="713" cy="843" r="0.55" fill-opacity="0.29"/><circle cx="906" cy="172" r="0.5" fill-opacity="0.26"/><circle cx="379" cy="6" r="0.55" fill-opacity="0.25"/><circle cx="683" cy="112" r="0.5" fill-opacity="0.68"/><circle cx="964" cy="180" r="0.55" fill-opacity="0.48"/><circle cx="510" cy="386" r="0.6" fill-opacity="0.63"/><circle cx="25" cy="185" r="0.6" fill-opacity="0.75"/><circle cx="989" cy="175" r="0.7" fill-opacity="0.69"/><circle cx="624" cy="121" r="0.6" fill-opacity="0.59"/><circle cx="12" cy="292" r="0.5" fill-opacity="0.28"/><circle cx="513" cy="414" r="0.7" fill-opacity="0.65"/><circle cx="960" cy="186" r="0.5" fill-opacity="0.55"/><circle cx="242" cy="224" r="0.5" fill-opacity="0.61"/><circle cx="900" cy="173" r="0.55" fill-opacity="0.64"/><circle cx="348" cy="108" r="0.6" fill-opacity="0.55"/><circle cx="302" cy="100" r="0.5" fill-opacity="0.31"/><circle cx="39" cy="837" r="1" fill-opacity="0.91"/><circle cx="938" cy="186" r="0.5" fill-opacity="0.27"/><circle cx="937" cy="183" r="0.55" fill-opacity="0.53"/><circle cx="348" cy="186" r="0.7" fill-opacity="0.33"/><circle cx="27" cy="741" r="0.5" fill-opacity="0.25"/><circle cx="508" cy="305" r="0.5" fill-opacity="0.32"/><circle cx="381" cy="186" r="0.5" fill-opacity="0.43"/><circle cx="33" cy="540" r="0.5" fill-opacity="0.48"/><circle cx="517" cy="538" r="0.9" fill-opacity="0.86"/><circle cx="585" cy="114" r="0.7" fill-opacity="0.75"/><circle cx="4" cy="70" r="0.5" fill-opacity="0.53"/><circle cx="17" cy="714" r="0.55" fill-opacity="0.38"/><circle cx="519" cy="333" r="0.6" fill-opacity="0.48"/><circle cx="890" cy="172" r="0.55" fill-opacity="0.48"/><circle cx="738" cy="109" r="1" fill-opacity="0.71"/><circle cx="995" cy="485" r="0.55" fill-opacity="0.48"/><circle cx="999" cy="426" r="0.6" fill-opacity="0.66"/><circle cx="796" cy="104" r="0.6" fill-opacity="0.32"/><circle cx="839" cy="186" r="0.6" fill-opacity="0.59"/><circle cx="806" cy="842" r="0.5" fill-opacity="0.26"/><circle cx="13" cy="233" r="1" fill-opacity="0.67"/><circle cx="10" cy="644" r="0.6" fill-opacity="0.3"/><circle cx="995" cy="544" r="0.5" fill-opacity="0.57"/><circle cx="514" cy="496" r="0.7" fill-opacity="0.52"/><circle cx="648" cy="163" r="0.7" fill-opacity="0.35"/><circle cx="28" cy="633" r="0.7" fill-opacity="0.4"/><circle cx="508" cy="519" r="0.55" fill-opacity="0.65"/><circle cx="26" cy="783" r="0.5" fill-opacity="0.75"/><circle cx="353" cy="186" r="0.55" fill-opacity="0.41"/><circle cx="17" cy="334" r="0.6" fill-opacity="0.57"/><circle cx="35" cy="306" r="0.7" fill-opacity="0.3"/><circle cx="36" cy="543" r="0.6" fill-opacity="0.4"/><circle cx="25" cy="590" r="0.55" fill-opacity="0.3"/><circle cx="14" cy="249" r="0.55" fill-opacity="0.51"/><circle cx="14" cy="484" r="0.5" fill-opacity="0.5"/><circle cx="17" cy="811" r="0.6" fill-opacity="0.54"/><circle cx="5" cy="567" r="0.55" fill-opacity="0.53"/><circle cx="767" cy="161" r="0.7" fill-opacity="0.73"/><circle cx="996" cy="219" r="0.7" fill-opacity="0.69"/><circle cx="4" cy="122" r="0.55" fill-opacity="0.34"/><circle cx="961" cy="223" r="0.5" fill-opacity="0.63"/><circle cx="494" cy="6" r="0.7" fill-opacity="0.67"/><circle cx="575" cy="844" r="0.7" fill-opacity="0.33"/><circle cx="509" cy="437" r="0.55" fill-opacity="0.32"/><circle cx="603" cy="112" r="0.7" fill-opacity="0.73"/><circle cx="305" cy="3" r="0.55" fill-opacity="0.4"/><circle cx="169" cy="112" r="0.5" fill-opacity="0.35"/><circle cx="13" cy="561" r="0.6" fill-opacity="0.74"/><circle cx="13" cy="633" r="0.55" fill-opacity="0.42"/><circle cx="527" cy="288" r="0.6" fill-opacity="0.67"/><circle cx="526" cy="446" r="0.7" fill-opacity="0.37"/><circle cx="69" cy="187" r="0.6" fill-opacity="0.32"/><circle cx="38" cy="486" r="0.55" fill-opacity="0.61"/><circle cx="33" cy="789" r="0.5" fill-opacity="0.71"/><circle cx="296" cy="107" r="0.55" fill-opacity="0.43"/><circle cx="530" cy="108" r="0.5" fill-opacity="0.37"/><circle cx="42" cy="701" r="0.5" fill-opacity="0.41"/><circle cx="762" cy="185" r="0.7" fill-opacity="0.32"/><circle cx="984" cy="159" r="0.7" fill-opacity="0.35"/><circle cx="37" cy="665" r="0.7" fill-opacity="0.32"/><circle cx="774" cy="173" r="0.7" fill-opacity="0.64"/><circle cx="26" cy="261" r="0.5" fill-opacity="0.68"/><circle cx="0" cy="292" r="0.6" fill-opacity="0.53"/><circle cx="256" cy="112" r="0.6" fill-opacity="0.5"/><circle cx="528" cy="684" r="0.55" fill-opacity="0.73"/><circle cx="513" cy="819" r="0.6" fill-opacity="0.4"/><circle cx="677" cy="107" r="0.5" fill-opacity="0.68"/><circle cx="523" cy="622" r="0.5" fill-opacity="0.46"/><circle cx="942" cy="170" r="0.5" fill-opacity="0.67"/><circle cx="680" cy="222" r="0.55" fill-opacity="0.68"/><circle cx="761" cy="185" r="0.55" fill-opacity="0.58"/><circle cx="963" cy="170" r="0.5" fill-opacity="0.43"/><circle cx="798" cy="184" r="0.55" fill-opacity="0.69"/><circle cx="997" cy="545" r="0.55" fill-opacity="0.37"/><circle cx="12" cy="448" r="0.7" fill-opacity="0.71"/><circle cx="608" cy="181" r="0.55" fill-opacity="0.48"/><circle cx="1" cy="513" r="0.6" fill-opacity="0.45"/><circle cx="508" cy="382" r="0.7" fill-opacity="0.41"/><circle cx="514" cy="761" r="0.7" fill-opacity="0.49"/><circle cx="11" cy="600" r="0.7" fill-opacity="0.32"/><circle cx="527" cy="472" r="0.6" fill-opacity="0.61"/><circle cx="510" cy="446" r="0.7" fill-opacity="0.3"/><circle cx="512" cy="186" r="0.5" fill-opacity="0.35"/><circle cx="14" cy="817" r="0.7" fill-opacity="0.68"/><circle cx="315" cy="99" r="1" fill-opacity="0.62"/><circle cx="256" cy="184" r="0.5" fill-opacity="0.37"/><circle cx="1" cy="722" r="0.5" fill-opacity="0.45"/><circle cx="428" cy="222" r="0.6" fill-opacity="0.39"/><circle cx="923" cy="101" r="0.6" fill-opacity="0.27"/><circle cx="99" cy="104" r="0.6" fill-opacity="0.51"/><circle cx="83" cy="222" r="0.55" fill-opacity="0.27"/><circle cx="313" cy="102" r="0.7" fill-opacity="0.52"/><circle cx="513" cy="654" r="0.5" fill-opacity="0.59"/><circle cx="516" cy="649" r="0.55" fill-opacity="0.4"/><circle cx="248" cy="183" r="0.6" fill-opacity="0.43"/><circle cx="23" cy="425" r="0.55" fill-opacity="0.46"/><circle cx="635" cy="162" r="0.6" fill-opacity="0.32"/><circle cx="9" cy="654" r="0.9" fill-opacity="0.68"/><circle cx="511" cy="676" r="0.5" fill-opacity="0.34"/><circle cx="777" cy="187" r="0.9" fill-opacity="0.88"/><circle cx="512" cy="659" r="0.6" fill-opacity="0.68"/><circle cx="513" cy="721" r="0.6" fill-opacity="0.47"/><circle cx="40" cy="667" r="0.5" fill-opacity="0.43"/><circle cx="222" cy="183" r="0.6" fill-opacity="0.59"/><circle cx="8" cy="630" r="0.7" fill-opacity="0.47"/><circle cx="40" cy="249" r="0.7" fill-opacity="0.67"/><circle cx="14" cy="590" r="0.55" fill-opacity="0.28"/><circle cx="516" cy="805" r="0.5" fill-opacity="0.45"/><circle cx="600" cy="181" r="0.55" fill-opacity="0.25"/><circle cx="273" cy="109" r="0.55" fill-opacity="0.56"/><circle cx="224" cy="187" r="0.5" fill-opacity="0.41"/><circle cx="14" cy="437" r="0.7" fill-opacity="0.49"/><circle cx="34" cy="724" r="0.5" fill-opacity="0.42"/><circle cx="459" cy="183" r="0.5" fill-opacity="0.27"/><circle cx="597" cy="101" r="0.5" fill-opacity="0.6"/><circle cx="564" cy="105" r="0.6" fill-opacity="0.68"/><circle cx="305" cy="5" r="0.55" fill-opacity="0.31"/><circle cx="7" cy="487" r="0.6" fill-opacity="0.33"/><circle cx="510" cy="788" r="0.5" fill-opacity="0.54"/><circle cx="671" cy="164" r="0.6" fill-opacity="0.43"/><circle cx="21" cy="464" r="0.5" fill-opacity="0.31"/><circle cx="645" cy="222" r="0.6" fill-opacity="0.27"/><circle cx="41" cy="670" r="1" fill-opacity="0.78"/><circle cx="887" cy="112" r="0.55" fill-opacity="0.71"/><circle cx="997" cy="454" r="0.5" fill-opacity="0.51"/><circle cx="524" cy="727" r="0.5" fill-opacity="0.57"/><circle cx="156" cy="69" r="0.7" fill-opacity="0.49"/><circle cx="808" cy="168" r="0.5" fill-opacity="0.47"/><circle cx="24" cy="400" r="0.5" fill-opacity="0.75"/><circle cx="20" cy="376" r="0.5" fill-opacity="0.69"/><circle cx="903" cy="159" r="0.6" fill-opacity="0.48"/><circle cx="512" cy="510" r="0.55" fill-opacity="0.64"/><circle cx="187" cy="108" r="0.6" fill-opacity="0.34"/><circle cx="998" cy="416" r="0.7" fill-opacity="0.44"/><circle cx="523" cy="234" r="0.5" fill-opacity="0.26"/><circle cx="271" cy="113" r="0.6" fill-opacity="0.34"/><circle cx="994" cy="376" r="0.55" fill-opacity="0.55"/><circle cx="26" cy="247" r="0.7" fill-opacity="0.28"/><circle cx="633" cy="179" r="0.5" fill-opacity="0.54"/><circle cx="857" cy="175" r="0.7" fill-opacity="0.42"/><circle cx="215" cy="5" r="0.55" fill-opacity="0.64"/><circle cx="29" cy="600" r="0.6" fill-opacity="0.74"/><circle cx="59" cy="842" r="0.6" fill-opacity="0.55"/><circle cx="512" cy="220" r="0.5" fill-opacity="0.57"/><circle cx="40" cy="761" r="0.7" fill-opacity="0.36"/><circle cx="963" cy="173" r="0.7" fill-opacity="0.5"/><circle cx="524" cy="638" r="0.7" fill-opacity="0.69"/><circle cx="994" cy="534" r="0.6" fill-opacity="0.64"/><circle cx="111" cy="108" r="0.5" fill-opacity="0.75"/><circle cx="5" cy="385" r="0.7" fill-opacity="0.48"/><circle cx="30" cy="303" r="0.6" fill-opacity="0.5"/><circle cx="778" cy="223" r="0.5" fill-opacity="0.49"/><circle cx="653" cy="171" r="0.5" fill-opacity="0.56"/><circle cx="526" cy="700" r="0.7" fill-opacity="0.5"/><circle cx="21" cy="617" r="0.6" fill-opacity="0.52"/><circle cx="0" cy="127" r="0.6" fill-opacity="0.27"/><circle cx="988" cy="179" r="0.55" fill-opacity="0.44"/><circle cx="177" cy="99" r="0.55" fill-opacity="0.31"/><circle cx="724" cy="166" r="0.5" fill-opacity="0.58"/><circle cx="19" cy="280" r="0.55" fill-opacity="0.27"/><circle cx="113" cy="112" r="0.7" fill-opacity="0.25"/><circle cx="999" cy="767" r="0.7" fill-opacity="0.43"/><circle cx="727" cy="108" r="0.55" fill-opacity="0.63"/><circle cx="684" cy="169" r="0.7" fill-opacity="0.6"/><circle cx="12" cy="166" r="0.7" fill-opacity="0.29"/><circle cx="32" cy="229" r="0.55" fill-opacity="0.4"/><circle cx="973" cy="819" r="0.6" fill-opacity="0.42"/><circle cx="86" cy="103" r="0.55" fill-opacity="0.4"/><circle cx="443" cy="7" r="0.6" fill-opacity="0.5"/><circle cx="19" cy="183" r="0.6" fill-opacity="0.74"/><circle cx="16" cy="332" r="0.7" fill-opacity="0.74"/><circle cx="769" cy="167" r="0.55" fill-opacity="0.71"/><circle cx="346" cy="185" r="0.8" fill-opacity="0.81"/><circle cx="706" cy="109" r="0.6" fill-opacity="0.54"/><circle cx="992" cy="224" r="0.7" fill-opacity="0.39"/><circle cx="40" cy="441" r="0.55" fill-opacity="0.53"/><circle cx="511" cy="556" r="0.55" fill-opacity="0.6"/><circle cx="971" cy="662" r="0.7" fill-opacity="0.52"/><circle cx="358" cy="103" r="0.55" fill-opacity="0.74"/><circle cx="528" cy="409" r="0.6" fill-opacity="0.54"/><circle cx="991" cy="51" r="0.8" fill-opacity="0.89"/><circle cx="17" cy="418" r="0.6" fill-opacity="0.33"/><circle cx="223" cy="187" r="0.6" fill-opacity="0.53"/><circle cx="910" cy="167" r="0.5" fill-opacity="0.53"/><circle cx="627" cy="122" r="0.5" fill-opacity="0.34"/><circle cx="958" cy="101" r="1" fill-opacity="0.65"/><circle cx="5" cy="807" r="0.55" fill-opacity="0.56"/><circle cx="40" cy="261" r="0.5" fill-opacity="0.4"/><circle cx="35" cy="767" r="0.6" fill-opacity="0.69"/><circle cx="517" cy="818" r="0.6" fill-opacity="0.25"/><circle cx="5" cy="654" r="0.6" fill-opacity="0.56"/><circle cx="855" cy="187" r="0.5" fill-opacity="0.52"/><circle cx="517" cy="316" r="0.5" fill-opacity="0.51"/><circle cx="627" cy="136" r="0.5" fill-opacity="0.58"/><circle cx="20" cy="384" r="0.6" fill-opacity="0.28"/><circle cx="512" cy="644" r="0.55" fill-opacity="0.69"/><circle cx="707" cy="174" r="0.8" fill-opacity="0.93"/><circle cx="260" cy="104" r="0.7" fill-opacity="0.45"/><circle cx="377" cy="113" r="0.55" fill-opacity="0.4"/><circle cx="481" cy="112" r="0.55" fill-opacity="0.61"/><circle cx="170" cy="100" r="0.6" fill-opacity="0.59"/><circle cx="29" cy="485" r="0.55" fill-opacity="0.32"/><circle cx="684" cy="182" r="0.5" fill-opacity="0.69"/><circle cx="520" cy="417" r="0.6" fill-opacity="0.73"/><circle cx="31" cy="668" r="0.5" fill-opacity="0.29"/><circle cx="24" cy="527" r="0.6" fill-opacity="0.39"/><circle cx="972" cy="294" r="1" fill-opacity="0.73"/><circle cx="455" cy="104" r="0.5" fill-opacity="0.44"/><circle cx="106" cy="842" r="0.55" fill-opacity="0.28"/><circle cx="511" cy="506" r="0.5" fill-opacity="0.49"/><circle cx="36" cy="464" r="0.7" fill-opacity="0.64"/><circle cx="946" cy="219" r="0.6" fill-opacity="0.45"/><circle cx="981" cy="127" r="0.7" fill-opacity="0.49"/><circle cx="928" cy="108" r="0.8" fill-opacity="0.79"/><circle cx="11" cy="647" r="0.5" fill-opacity="0.71"/><circle cx="519" cy="510" r="0.5" fill-opacity="0.31"/><circle cx="8" cy="212" r="0.6" fill-opacity="0.7"/><circle cx="528" cy="239" r="0.6" fill-opacity="0.51"/><circle cx="21" cy="375" r="0.55" fill-opacity="0.66"/><circle cx="466" cy="221" r="0.55" fill-opacity="0.33"/><circle cx="510" cy="834" r="0.7" fill-opacity="0.68"/><circle cx="203" cy="107" r="0.6" fill-opacity="0.33"/><circle cx="20" cy="262" r="0.5" fill-opacity="0.53"/><circle cx="990" cy="32" r="0.6" fill-opacity="0.48"/><circle cx="818" cy="112" r="0.6" fill-opacity="0.59"/><circle cx="517" cy="393" r="0.7" fill-opacity="0.64"/><circle cx="3" cy="46" r="0.5" fill-opacity="0.3"/><circle cx="518" cy="600" r="0.7" fill-opacity="0.58"/><circle cx="522" cy="412" r="0.5" fill-opacity="0.41"/><circle cx="381" cy="181" r="0.5" fill-opacity="0.28"/><circle cx="26" cy="679" r="0.6" fill-opacity="0.37"/><circle cx="990" cy="26" r="0.55" fill-opacity="0.57"/><circle cx="995" cy="449" r="0.5" fill-opacity="0.49"/><circle cx="2" cy="296" r="0.6" fill-opacity="0.59"/><circle cx="1" cy="686" r="0.7" fill-opacity="0.28"/><circle cx="947" cy="167" r="0.5" fill-opacity="0.41"/><circle cx="4" cy="486" r="0.5" fill-opacity="0.33"/><circle cx="259" cy="187" r="0.55" fill-opacity="0.53"/><circle cx="858" cy="223" r="0.6" fill-opacity="0.29"/><circle cx="510" cy="627" r="0.5" fill-opacity="0.51"/><circle cx="42" cy="492" r="0.55" fill-opacity="0.43"/><circle cx="0" cy="171" r="0.7" fill-opacity="0.5"/><circle cx="997" cy="299" r="0.6" fill-opacity="0.63"/><circle cx="33" cy="760" r="0.6" fill-opacity="0.61"/><circle cx="484" cy="774" r="0.6" fill-opacity="0.7"/><circle cx="515" cy="600" r="0.55" fill-opacity="0.52"/><circle cx="28" cy="535" r="0.5" fill-opacity="0.68"/><circle cx="513" cy="553" r="0.55" fill-opacity="0.5"/><circle cx="12" cy="411" r="0.55" fill-opacity="0.51"/><circle cx="11" cy="444" r="0.7" fill-opacity="0.28"/><circle cx="516" cy="740" r="0.5" fill-opacity="0.46"/><circle cx="490" cy="112" r="0.6" fill-opacity="0.28"/><circle cx="855" cy="843" r="0.55" fill-opacity="0.56"/><circle cx="660" cy="171" r="0.6" fill-opacity="0.52"/><circle cx="34" cy="721" r="0.7" fill-opacity="0.59"/><circle cx="645" cy="182" r="0.7" fill-opacity="0.36"/><circle cx="526" cy="281" r="0.5" fill-opacity="0.35"/><circle cx="972" cy="712" r="0.7" fill-opacity="0.42"/><circle cx="513" cy="227" r="0.5" fill-opacity="0.3"/><circle cx="389" cy="114" r="0.5" fill-opacity="0.56"/><circle cx="520" cy="505" r="0.7" fill-opacity="0.51"/><circle cx="630" cy="171" r="0.5" fill-opacity="0.29"/><circle cx="14" cy="454" r="0.6" fill-opacity="0.64"/><circle cx="21" cy="252" r="1" fill-opacity="0.73"/><circle cx="613" cy="108" r="0.9" fill-opacity="0.61"/><circle cx="627" cy="110" r="0.6" fill-opacity="0.62"/><circle cx="805" cy="180" r="0.7" fill-opacity="0.33"/><circle cx="787" cy="110" r="0.7" fill-opacity="0.65"/><circle cx="26" cy="444" r="0.55" fill-opacity="0.44"/><circle cx="987" cy="173" r="0.7" fill-opacity="0.66"/><circle cx="9" cy="829" r="0.5" fill-opacity="0.61"/><circle cx="870" cy="223" r="0.55" fill-opacity="0.49"/><circle cx="2" cy="815" r="0.6" fill-opacity="0.47"/><circle cx="509" cy="283" r="0.6" fill-opacity="0.43"/><circle cx="18" cy="627" r="0.55" fill-opacity="0.64"/><circle cx="617" cy="163" r="0.5" fill-opacity="0.65"/><circle cx="139" cy="107" r="0.5" fill-opacity="0.43"/><circle cx="14" cy="843" r="0.7" fill-opacity="0.5"/><circle cx="205" cy="186" r="0.55" fill-opacity="0.73"/><circle cx="742" cy="113" r="0.55" fill-opacity="0.28"/><circle cx="10" cy="490" r="0.6" fill-opacity="0.72"/><circle cx="955" cy="159" r="0.6" fill-opacity="0.66"/><circle cx="5" cy="806" r="0.5" fill-opacity="0.41"/><circle cx="358" cy="108" r="0.7" fill-opacity="0.4"/><circle cx="355" cy="187" r="0.55" fill-opacity="0.73"/><circle cx="747" cy="164" r="0.6" fill-opacity="0.44"/><circle cx="727" cy="160" r="0.55" fill-opacity="0.54"/><circle cx="364" cy="3" r="0.55" fill-opacity="0.36"/><circle cx="527" cy="360" r="0.5" fill-opacity="0.3"/><circle cx="34" cy="257" r="0.55" fill-opacity="0.43"/><circle cx="835" cy="104" r="0.7" fill-opacity="0.57"/><circle cx="523" cy="400" r="0.7" fill-opacity="0.72"/><circle cx="514" cy="224" r="0.6" fill-opacity="0.64"/><circle cx="13" cy="549" r="0.55" fill-opacity="0.31"/><circle cx="8" cy="120" r="0.7" fill-opacity="0.36"/><circle cx="38" cy="742" r="0.5" fill-opacity="0.28"/><circle cx="669" cy="159" r="0.55" fill-opacity="0.3"/><circle cx="118" cy="104" r="0.55" fill-opacity="0.62"/><circle cx="40" cy="806" r="0.5" fill-opacity="0.54"/><circle cx="452" cy="221" r="0.6" fill-opacity="0.32"/><circle cx="20" cy="323" r="0.55" fill-opacity="0.56"/><circle cx="935" cy="103" r="0.7" fill-opacity="0.26"/><circle cx="886" cy="168" r="0.55" fill-opacity="0.43"/><circle cx="979" cy="109" r="0.6" fill-opacity="0.7"/><circle cx="46" cy="105" r="0.55" fill-opacity="0.59"/><circle cx="8" cy="554" r="0.6" fill-opacity="0.72"/><circle cx="20" cy="427" r="0.6" fill-opacity="0.74"/><circle cx="425" cy="106" r="0.6" fill-opacity="0.53"/><circle cx="725" cy="3" r="0.55" fill-opacity="0.3"/><circle cx="13" cy="320" r="0.7" fill-opacity="0.4"/><circle cx="516" cy="730" r="0.5" fill-opacity="0.72"/><circle cx="155" cy="67" r="0.5" fill-opacity="0.7"/><circle cx="997" cy="666" r="0.5" fill-opacity="0.72"/><circle cx="10" cy="421" r="0.6" fill-opacity="0.44"/><circle cx="221" cy="106" r="0.7" fill-opacity="0.66"/><circle cx="703" cy="3" r="0.55" fill-opacity="0.42"/><circle cx="26" cy="375" r="0.55" fill-opacity="0.55"/><circle cx="37" cy="775" r="0.55" fill-opacity="0.61"/><circle cx="991" cy="107" r="0.7" fill-opacity="0.31"/><circle cx="15" cy="301" r="0.7" fill-opacity="0.69"/><circle cx="514" cy="227" r="0.7" fill-opacity="0.3"/><circle cx="872" cy="109" r="0.9" fill-opacity="0.94"/><circle cx="864" cy="175" r="0.5" fill-opacity="0.61"/><circle cx="327" cy="104" r="0.5" fill-opacity="0.44"/><circle cx="514" cy="416" r="0.5" fill-opacity="0.4"/><circle cx="24" cy="836" r="0.6" fill-opacity="0.34"/><circle cx="24" cy="248" r="0.5" fill-opacity="0.46"/><circle cx="497" cy="101" r="0.7" fill-opacity="0.66"/><circle cx="791" cy="162" r="0.7" fill-opacity="0.56"/><circle cx="46" cy="107" r="0.8" fill-opacity="0.66"/><circle cx="843" cy="223" r="0.6" fill-opacity="0.51"/><circle cx="28" cy="660" r="0.6" fill-opacity="0.46"/><circle cx="936" cy="187" r="0.55" fill-opacity="0.62"/><circle cx="507" cy="729" r="0.55" fill-opacity="0.68"/><circle cx="926" cy="170" r="0.6" fill-opacity="0.31"/><circle cx="1" cy="292" r="0.6" fill-opacity="0.41"/><circle cx="23" cy="297" r="0.5" fill-opacity="0.36"/><circle cx="522" cy="627" r="0.5" fill-opacity="0.51"/><circle cx="512" cy="580" r="0.55" fill-opacity="0.67"/><circle cx="514" cy="650" r="0.6" fill-opacity="0.39"/><circle cx="486" cy="454" r="0.5" fill-opacity="0.54"/><circle cx="611" cy="4" r="0.7" fill-opacity="0.75"/><circle cx="18" cy="482" r="0.9" fill-opacity="0.67"/><circle cx="3" cy="81" r="0.55" fill-opacity="0.38"/><circle cx="445" cy="110" r="0.5" fill-opacity="0.65"/><circle cx="12" cy="290" r="0.7" fill-opacity="0.36"/><circle cx="32" cy="644" r="0.6" fill-opacity="0.75"/><circle cx="12" cy="336" r="0.6" fill-opacity="0.66"/><circle cx="703" cy="99" r="0.6" fill-opacity="0.33"/><circle cx="17" cy="714" r="0.5" fill-opacity="0.51"/><circle cx="23" cy="386" r="0.6" fill-opacity="0.29"/><circle cx="810" cy="185" r="0.55" fill-opacity="0.65"/><circle cx="509" cy="466" r="0.7" fill-opacity="0.75"/><circle cx="742" cy="99" r="0.7" fill-opacity="0.73"/><circle cx="857" cy="219" r="0.5" fill-opacity="0.51"/><circle cx="845" cy="173" r="0.5" fill-opacity="0.48"/><circle cx="721" cy="165" r="0.5" fill-opacity="0.53"/><circle cx="978" cy="224" r="0.7" fill-opacity="0.55"/><circle cx="584" cy="102" r="0.55" fill-opacity="0.66"/><circle cx="723" cy="174" r="0.7" fill-opacity="0.47"/><circle cx="514" cy="268" r="0.5" fill-opacity="0.66"/><circle cx="15" cy="322" r="0.55" fill-opacity="0.39"/><circle cx="35" cy="576" r="0.7" fill-opacity="0.44"/><circle cx="38" cy="225" r="0.7" fill-opacity="0.39"/><circle cx="507" cy="303" r="0.7" fill-opacity="0.69"/><circle cx="424" cy="223" r="0.5" fill-opacity="0.3"/><circle cx="799" cy="107" r="0.6" fill-opacity="0.37"/><circle cx="968" cy="185" r="0.6" fill-opacity="0.54"/><circle cx="524" cy="771" r="0.5" fill-opacity="0.72"/><circle cx="303" cy="108" r="1" fill-opacity="0.93"/><circle cx="813" cy="159" r="0.5" fill-opacity="0.4"/><circle cx="996" cy="232" r="0.55" fill-opacity="0.72"/><circle cx="521" cy="714" r="0.5" fill-opacity="0.37"/><circle cx="3" cy="611" r="0.7" fill-opacity="0.54"/><circle cx="704" cy="160" r="0.7" fill-opacity="0.34"/><circle cx="24" cy="596" r="0.7" fill-opacity="0.57"/><circle cx="230" cy="185" r="0.6" fill-opacity="0.5"/><circle cx="37" cy="415" r="0.6" fill-opacity="0.41"/><circle cx="525" cy="371" r="0.7" fill-opacity="0.46"/><circle cx="600" cy="188" r="0.55" fill-opacity="0.37"/><circle cx="256" cy="219" r="0.55" fill-opacity="0.67"/><circle cx="57" cy="219" r="0.5" fill-opacity="0.64"/><circle cx="450" cy="98" r="0.55" fill-opacity="0.33"/><circle cx="525" cy="769" r="0.6" fill-opacity="0.37"/><circle cx="534" cy="842" r="0.5" fill-opacity="0.41"/><circle cx="767" cy="111" r="0.5" fill-opacity="0.67"/><circle cx="23" cy="732" r="0.6" fill-opacity="0.6"/><circle cx="8" cy="622" r="0.6" fill-opacity="0.35"/><circle cx="594" cy="843" r="0.6" fill-opacity="0.65"/><circle cx="34" cy="485" r="0.55" fill-opacity="0.52"/><circle cx="17" cy="365" r="0.55" fill-opacity="0.3"/><circle cx="798" cy="105" r="0.55" fill-opacity="0.53"/><circle cx="528" cy="691" r="0.55" fill-opacity="0.5"/><circle cx="6" cy="293" r="0.7" fill-opacity="0.46"/><circle cx="12" cy="812" r="0.7" fill-opacity="0.71"/><circle cx="447" cy="842" r="0.55" fill-opacity="0.75"/><circle cx="167" cy="111" r="0.6" fill-opacity="0.58"/><circle cx="996" cy="53" r="0.5" fill-opacity="0.59"/><circle cx="671" cy="104" r="0.8" fill-opacity="0.89"/><circle cx="688" cy="167" r="0.7" fill-opacity="0.6"/><circle cx="508" cy="396" r="0.5" fill-opacity="0.43"/><circle cx="412" cy="222" r="0.7" fill-opacity="0.7"/><circle cx="527" cy="572" r="0.55" fill-opacity="0.38"/><circle cx="100" cy="185" r="0.5" fill-opacity="0.45"/><circle cx="15" cy="287" r="0.8" fill-opacity="0.83"/><circle cx="485" cy="760" r="0.6" fill-opacity="0.47"/><circle cx="122" cy="224" r="0.5" fill-opacity="0.52"/><circle cx="994" cy="163" r="0.5" fill-opacity="0.51"/><circle cx="100" cy="219" r="0.6" fill-opacity="0.67"/><circle cx="26" cy="320" r="0.7" fill-opacity="0.44"/><circle cx="519" cy="281" r="0.6" fill-opacity="0.39"/><circle cx="857" cy="174" r="0.5" fill-opacity="0.71"/><circle cx="993" cy="120" r="0.7" fill-opacity="0.6"/><circle cx="326" cy="5" r="0.5" fill-opacity="0.33"/><circle cx="157" cy="64" r="0.5" fill-opacity="0.44"/><circle cx="972" cy="837" r="0.55" fill-opacity="0.63"/><circle cx="12" cy="584" r="0.5" fill-opacity="0.7"/><circle cx="9" cy="123" r="0.7" fill-opacity="0.65"/><circle cx="35" cy="657" r="0.7" fill-opacity="0.33"/><circle cx="992" cy="56" r="0.7" fill-opacity="0.52"/><circle cx="41" cy="607" r="0.55" fill-opacity="0.62"/><circle cx="247" cy="111" r="0.7" fill-opacity="0.39"/><circle cx="37" cy="715" r="0.7" fill-opacity="0.4"/><circle cx="16" cy="184" r="0.7" fill-opacity="0.5"/><circle cx="983" cy="115" r="0.5" fill-opacity="0.59"/><circle cx="14" cy="544" r="0.5" fill-opacity="0.42"/><circle cx="17" cy="313" r="0.6" fill-opacity="0.41"/><circle cx="508" cy="260" r="0.7" fill-opacity="0.54"/><circle cx="529" cy="614" r="0.55" fill-opacity="0.69"/><circle cx="33" cy="788" r="0.55" fill-opacity="0.54"/><circle cx="26" cy="239" r="0.6" fill-opacity="0.29"/><circle cx="984" cy="152" r="0.5" fill-opacity="0.52"/><circle cx="29" cy="506" r="0.5" fill-opacity="0.45"/><circle cx="523" cy="439" r="0.7" fill-opacity="0.71"/><circle cx="32" cy="724" r="0.5" fill-opacity="0.39"/><circle cx="510" cy="5" r="0.5" fill-opacity="0.56"/><circle cx="995" cy="235" r="0.55" fill-opacity="0.7"/><circle cx="509" cy="329" r="0.7" fill-opacity="0.69"/><circle cx="374" cy="98" r="0.5" fill-opacity="0.44"/><circle cx="538" cy="105" r="0.5" fill-opacity="0.3"/><circle cx="3" cy="174" r="0.6" fill-opacity="0.66"/><circle cx="971" cy="724" r="0.55" fill-opacity="0.36"/><circle cx="220" cy="843" r="0.5" fill-opacity="0.37"/><circle cx="196" cy="187" r="0.6" fill-opacity="0.26"/><circle cx="798" cy="224" r="0.6" fill-opacity="0.62"/><circle cx="25" cy="382" r="0.7" fill-opacity="0.33"/><circle cx="515" cy="728" r="0.55" fill-opacity="0.43"/><circle cx="296" cy="113" r="0.7" fill-opacity="0.37"/><circle cx="0" cy="357" r="0.6" fill-opacity="0.31"/><circle cx="16" cy="607" r="0.7" fill-opacity="0.74"/><circle cx="517" cy="370" r="0.55" fill-opacity="0.4"/><circle cx="994" cy="227" r="0.5" fill-opacity="0.58"/><circle cx="10" cy="819" r="0.6" fill-opacity="0.58"/><circle cx="795" cy="163" r="0.55" fill-opacity="0.48"/><circle cx="6" cy="812" r="0.9" fill-opacity="0.74"/><circle cx="22" cy="430" r="0.6" fill-opacity="0.25"/><circle cx="184" cy="186" r="0.7" fill-opacity="0.62"/><circle cx="882" cy="843" r="0.7" fill-opacity="0.38"/><circle cx="7" cy="232" r="0.6" fill-opacity="0.43"/><circle cx="528" cy="409" r="0.5" fill-opacity="0.71"/><circle cx="938" cy="166" r="0.5" fill-opacity="0.45"/><circle cx="522" cy="682" r="0.7" fill-opacity="0.38"/><circle cx="21" cy="502" r="0.5" fill-opacity="0.47"/><circle cx="509" cy="772" r="0.7" fill-opacity="0.46"/><circle cx="513" cy="353" r="0.7" fill-opacity="0.55"/><circle cx="978" cy="219" r="0.5" fill-opacity="0.34"/><circle cx="176" cy="221" r="0.7" fill-opacity="0.57"/><circle cx="511" cy="778" r="0.55" fill-opacity="0.65"/><circle cx="14" cy="753" r="0.6" fill-opacity="0.48"/><circle cx="34" cy="713" r="0.5" fill-opacity="0.33"/><circle cx="704" cy="178" r="0.55" fill-opacity="0.27"/><circle cx="33" cy="702" r="0.7" fill-opacity="0.37"/><circle cx="691" cy="170" r="0.6" fill-opacity="0.41"/><circle cx="6" cy="470" r="0.5" fill-opacity="0.44"/><circle cx="10" cy="445" r="0.6" fill-opacity="0.42"/><circle cx="471" cy="183" r="0.55" fill-opacity="0.63"/><circle cx="962" cy="109" r="0.7" fill-opacity="0.32"/><circle cx="239" cy="223" r="0.5" fill-opacity="0.42"/><circle cx="839" cy="159" r="0.6" fill-opacity="0.38"/><circle cx="12" cy="137" r="0.5" fill-opacity="0.73"/><circle cx="328" cy="2" r="0.55" fill-opacity="0.27"/><circle cx="37" cy="575" r="0.6" fill-opacity="0.33"/><circle cx="524" cy="471" r="0.55" fill-opacity="0.74"/><circle cx="933" cy="221" r="0.5" fill-opacity="0.62"/><circle cx="28" cy="496" r="0.6" fill-opacity="0.63"/><circle cx="1" cy="829" r="0.7" fill-opacity="0.27"/><circle cx="18" cy="321" r="0.7" fill-opacity="0.37"/><circle cx="705" cy="111" r="0.55" fill-opacity="0.27"/><circle cx="529" cy="731" r="0.55" fill-opacity="0.47"/><circle cx="688" cy="220" r="0.55" fill-opacity="0.35"/><circle cx="424" cy="844" r="0.55" fill-opacity="0.33"/><circle cx="24" cy="699" r="0.6" fill-opacity="0.61"/><circle cx="796" cy="167" r="0.6" fill-opacity="0.32"/><circle cx="24" cy="235" r="0.6" fill-opacity="0.66"/><circle cx="527" cy="545" r="0.5" fill-opacity="0.32"/><circle cx="893" cy="180" r="0.5" fill-opacity="0.4"/><circle cx="199" cy="106" r="0.55" fill-opacity="0.54"/><circle cx="37" cy="288" r="0.7" fill-opacity="0.43"/><circle cx="22" cy="654" r="0.5" fill-opacity="0.53"/><circle cx="646" cy="168" r="0.6" fill-opacity="0.62"/><circle cx="663" cy="221" r="0.7" fill-opacity="0.46"/><circle cx="22" cy="453" r="0.55" fill-opacity="0.45"/><circle cx="103" cy="111" r="0.6" fill-opacity="0.72"/><circle cx="25" cy="426" r="0.7" fill-opacity="0.53"/><circle cx="972" cy="422" r="0.6" fill-opacity="0.54"/><circle cx="971" cy="640" r="0.55" fill-opacity="0.51"/><circle cx="700" cy="843" r="0.7" fill-opacity="0.41"/><circle cx="510" cy="653" r="0.55" fill-opacity="0.72"/><circle cx="7" cy="294" r="0.5" fill-opacity="0.56"/><circle cx="313" cy="186" r="0.7" fill-opacity="0.71"/><circle cx="828" cy="843" r="0.5" fill-opacity="0.42"/><circle cx="6" cy="299" r="0.5" fill-opacity="0.45"/><circle cx="9" cy="422" r="0.7" fill-opacity="0.25"/><circle cx="23" cy="413" r="0.6" fill-opacity="0.33"/><circle cx="993" cy="74" r="0.7" fill-opacity="0.7"/><circle cx="416" cy="3" r="0.55" fill-opacity="0.49"/><circle cx="518" cy="537" r="0.7" fill-opacity="0.3"/><circle cx="925" cy="180" r="0.6" fill-opacity="0.53"/><circle cx="31" cy="841" r="0.6" fill-opacity="0.3"/><circle cx="655" cy="4" r="1" fill-opacity="0.81"/><circle cx="42" cy="325" r="0.7" fill-opacity="0.29"/><circle cx="846" cy="184" r="0.55" fill-opacity="0.71"/><circle cx="561" cy="221" r="0.5" fill-opacity="0.71"/><circle cx="839" cy="181" r="0.7" fill-opacity="0.45"/><circle cx="24" cy="449" r="0.7" fill-opacity="0.55"/><circle cx="525" cy="274" r="0.6" fill-opacity="0.36"/><circle cx="400" cy="182" r="0.55" fill-opacity="0.4"/><circle cx="43" cy="102" r="0.7" fill-opacity="0.28"/><circle cx="612" cy="109" r="0.5" fill-opacity="0.43"/><circle cx="696" cy="110" r="0.5" fill-opacity="0.27"/><circle cx="553" cy="223" r="0.6" fill-opacity="0.52"/><circle cx="9" cy="342" r="0.6" fill-opacity="0.61"/><circle cx="517" cy="472" r="0.6" fill-opacity="0.47"/><circle cx="600" cy="186" r="0.6" fill-opacity="0.5"/><circle cx="931" cy="171" r="0.8" fill-opacity="0.91"/><circle cx="521" cy="585" r="0.6" fill-opacity="0.35"/><circle cx="41" cy="625" r="0.6" fill-opacity="0.65"/><circle cx="204" cy="186" r="0.5" fill-opacity="0.38"/><circle cx="21" cy="712" r="0.7" fill-opacity="0.27"/><circle cx="25" cy="703" r="0.5" fill-opacity="0.35"/><circle cx="31" cy="301" r="0.6" fill-opacity="0.72"/><circle cx="34" cy="640" r="0.7" fill-opacity="0.26"/><circle cx="645" cy="181" r="0.5" fill-opacity="0.68"/><circle cx="517" cy="766" r="1" fill-opacity="0.72"/><circle cx="223" cy="2" r="0.6" fill-opacity="0.43"/><circle cx="42" cy="695" r="0.55" fill-opacity="0.36"/><circle cx="554" cy="109" r="0.7" fill-opacity="0.61"/><circle cx="883" cy="187" r="1" fill-opacity="0.72"/><circle cx="33" cy="392" r="0.55" fill-opacity="0.39"/><circle cx="718" cy="178" r="0.5" fill-opacity="0.61"/><circle cx="149" cy="101" r="0.7" fill-opacity="0.32"/><circle cx="554" cy="221" r="0.7" fill-opacity="0.49"/><circle cx="28" cy="230" r="0.6" fill-opacity="0.58"/><circle cx="773" cy="167" r="0.5" fill-opacity="0.65"/><circle cx="519" cy="685" r="0.6" fill-opacity="0.61"/><circle cx="303" cy="183" r="0.5" fill-opacity="0.28"/><circle cx="516" cy="664" r="0.55" fill-opacity="0.67"/><circle cx="10" cy="331" r="0.55" fill-opacity="0.62"/><circle cx="3" cy="512" r="0.6" fill-opacity="0.62"/><circle cx="525" cy="552" r="0.5" fill-opacity="0.34"/><circle cx="620" cy="105" r="0.5" fill-opacity="0.42"/><circle cx="932" cy="104" r="0.55" fill-opacity="0.5"/><circle cx="3" cy="471" r="0.55" fill-opacity="0.39"/><circle cx="842" cy="109" r="0.6" fill-opacity="0.35"/><circle cx="7" cy="546" r="0.5" fill-opacity="0.35"/><circle cx="528" cy="760" r="0.6" fill-opacity="0.56"/><circle cx="188" cy="843" r="0.7" fill-opacity="0.41"/><circle cx="997" cy="521" r="0.7" fill-opacity="0.61"/><circle cx="997" cy="175" r="0.5" fill-opacity="0.48"/><circle cx="669" cy="6" r="0.7" fill-opacity="0.37"/><circle cx="556" cy="186" r="0.6" fill-opacity="0.75"/><circle cx="33" cy="742" r="0.5" fill-opacity="0.46"/><circle cx="986" cy="171" r="0.55" fill-opacity="0.6"/><circle cx="509" cy="346" r="0.7" fill-opacity="0.63"/><circle cx="27" cy="791" r="0.5" fill-opacity="0.69"/><circle cx="404" cy="104" r="0.7" fill-opacity="0.38"/><circle cx="18" cy="502" r="0.5" fill-opacity="0.27"/><circle cx="30" cy="108" r="0.6" fill-opacity="0.63"/><circle cx="42" cy="550" r="0.6" fill-opacity="0.54"/><circle cx="647" cy="169" r="0.7" fill-opacity="0.39"/><circle cx="832" cy="183" r="0.5" fill-opacity="0.39"/><circle cx="995" cy="745" r="0.6" fill-opacity="0.51"/><circle cx="826" cy="105" r="0.6" fill-opacity="0.7"/><circle cx="738" cy="166" r="0.7" fill-opacity="0.3"/><circle cx="991" cy="187" r="0.7" fill-opacity="0.33"/><circle cx="156" cy="34" r="0.7" fill-opacity="0.52"/><circle cx="995" cy="468" r="0.55" fill-opacity="0.59"/><circle cx="519" cy="498" r="0.5" fill-opacity="0.63"/><circle cx="800" cy="223" r="0.55" fill-opacity="0.52"/><circle cx="339" cy="102" r="0.55" fill-opacity="0.35"/><circle cx="7" cy="579" r="0.6" fill-opacity="0.33"/><circle cx="125" cy="106" r="0.5" fill-opacity="0.59"/><circle cx="973" cy="336" r="0.5" fill-opacity="0.62"/><circle cx="31" cy="545" r="0.6" fill-opacity="0.26"/><circle cx="36" cy="109" r="0.8" fill-opacity="0.87"/><circle cx="89" cy="103" r="0.7" fill-opacity="0.47"/><circle cx="887" cy="172" r="0.55" fill-opacity="0.59"/><circle cx="37" cy="382" r="0.5" fill-opacity="0.55"/><circle cx="996" cy="746" r="0.55" fill-opacity="0.31"/><circle cx="878" cy="188" r="0.55" fill-opacity="0.59"/><circle cx="545" cy="2" r="0.55" fill-opacity="0.74"/><circle cx="755" cy="161" r="0.7" fill-opacity="0.43"/><circle cx="285" cy="186" r="0.5" fill-opacity="0.58"/><circle cx="208" cy="104" r="0.55" fill-opacity="0.26"/><circle cx="840" cy="172" r="0.7" fill-opacity="0.34"/><circle cx="25" cy="771" r="0.5" fill-opacity="0.53"/><circle cx="527" cy="634" r="0.7" fill-opacity="0.36"/><circle cx="697" cy="167" r="0.7" fill-opacity="0.37"/><circle cx="317" cy="220" r="1" fill-opacity="0.74"/><circle cx="516" cy="258" r="0.8" fill-opacity="0.94"/><circle cx="115" cy="843" r="0.6" fill-opacity="0.63"/><circle cx="523" cy="635" r="0.55" fill-opacity="0.63"/><circle cx="228" cy="103" r="0.5" fill-opacity="0.57"/><circle cx="994" cy="14" r="0.5" fill-opacity="0.53"/><circle cx="960" cy="181" r="0.55" fill-opacity="0.29"/><circle cx="863" cy="162" r="0.7" fill-opacity="0.67"/><circle cx="42" cy="313" r="0.55" fill-opacity="0.49"/><circle cx="34" cy="539" r="0.7" fill-opacity="0.68"/><circle cx="5" cy="22" r="0.6" fill-opacity="0.61"/><circle cx="950" cy="223" r="0.5" fill-opacity="0.35"/><circle cx="525" cy="314" r="0.5" fill-opacity="0.72"/><circle cx="626" cy="223" r="0.7" fill-opacity="0.33"/><circle cx="884" cy="166" r="0.6" fill-opacity="0.44"/><circle cx="995" cy="250" r="0.6" fill-opacity="0.71"/><circle cx="636" cy="176" r="0.5" fill-opacity="0.27"/><circle cx="39" cy="441" r="0.6" fill-opacity="0.73"/><circle cx="331" cy="111" r="0.5" fill-opacity="0.59"/><circle cx="511" cy="820" r="0.6" fill-opacity="0.46"/><circle cx="996" cy="287" r="0.7" fill-opacity="0.27"/><circle cx="522" cy="790" r="0.5" fill-opacity="0.45"/><circle cx="13" cy="417" r="0.55" fill-opacity="0.38"/><circle cx="19" cy="812" r="0.5" fill-opacity="0.25"/><circle cx="520" cy="795" r="0.5" fill-opacity="0.45"/><circle cx="5" cy="732" r="0.55" fill-opacity="0.69"/><circle cx="32" cy="673" r="0.7" fill-opacity="0.25"/><circle cx="18" cy="246" r="0.6" fill-opacity="0.51"/><circle cx="33" cy="309" r="0.7" fill-opacity="0.45"/><circle cx="11" cy="660" r="0.6" fill-opacity="0.35"/><circle cx="998" cy="768" r="0.6" fill-opacity="0.27"/><circle cx="1" cy="612" r="0.5" fill-opacity="0.64"/><circle cx="998" cy="766" r="0.6" fill-opacity="0.74"/><circle cx="18" cy="321" r="0.5" fill-opacity="0.73"/><circle cx="500" cy="113" r="0.7" fill-opacity="0.49"/><circle cx="995" cy="539" r="0.6" fill-opacity="0.49"/><circle cx="991" cy="72" r="0.6" fill-opacity="0.7"/><circle cx="256" cy="222" r="0.55" fill-opacity="0.4"/><circle cx="890" cy="162" r="0.55" fill-opacity="0.5"/><circle cx="777" cy="105" r="0.6" fill-opacity="0.65"/><circle cx="486" cy="724" r="0.55" fill-opacity="0.3"/><circle cx="922" cy="101" r="0.8" fill-opacity="0.74"/><circle cx="599" cy="220" r="0.5" fill-opacity="0.28"/><circle cx="19" cy="286" r="1" fill-opacity="0.91"/><circle cx="156" cy="4" r="0.7" fill-opacity="0.59"/><circle cx="511" cy="485" r="0.7" fill-opacity="0.3"/><circle cx="2" cy="520" r="0.6" fill-opacity="0.44"/><circle cx="520" cy="598" r="0.7" fill-opacity="0.39"/><circle cx="33" cy="834" r="1" fill-opacity="0.89"/><circle cx="28" cy="307" r="0.55" fill-opacity="0.58"/><circle cx="725" cy="103" r="0.6" fill-opacity="0.67"/><circle cx="32" cy="348" r="0.5" fill-opacity="0.31"/><circle cx="71" cy="182" r="1" fill-opacity="0.7"/><circle cx="745" cy="185" r="0.7" fill-opacity="0.68"/><circle cx="520" cy="515" r="0.55" fill-opacity="0.65"/><circle cx="945" cy="842" r="0.6" fill-opacity="0.56"/><circle cx="520" cy="511" r="0.6" fill-opacity="0.7"/><circle cx="18" cy="438" r="0.8" fill-opacity="0.77"/><circle cx="515" cy="738" r="0.55" fill-opacity="0.36"/><circle cx="857" cy="179" r="0.55" fill-opacity="0.29"/><circle cx="485" cy="808" r="0.6" fill-opacity="0.36"/><circle cx="622" cy="164" r="0.7" fill-opacity="0.47"/><circle cx="35" cy="840" r="0.6" fill-opacity="0.53"/><circle cx="290" cy="111" r="0.5" fill-opacity="0.46"/><circle cx="486" cy="636" r="0.55" fill-opacity="0.71"/><circle cx="205" cy="220" r="0.55" fill-opacity="0.54"/><circle cx="30" cy="497" r="0.7" fill-opacity="0.4"/><circle cx="2" cy="514" r="0.5" fill-opacity="0.56"/><circle cx="29" cy="760" r="0.7" fill-opacity="0.73"/><circle cx="818" cy="182" r="0.55" fill-opacity="0.41"/><circle cx="776" cy="100" r="0.5" fill-opacity="0.46"/><circle cx="42" cy="734" r="0.55" fill-opacity="0.43"/><circle cx="17" cy="274" r="0.6" fill-opacity="0.53"/><circle cx="695" cy="109" r="0.6" fill-opacity="0.45"/><circle cx="32" cy="634" r="0.6" fill-opacity="0.33"/><circle cx="490" cy="108" r="0.6" fill-opacity="0.42"/><circle cx="27" cy="703" r="0.55" fill-opacity="0.7"/><circle cx="35" cy="436" r="0.6" fill-opacity="0.67"/><circle cx="34" cy="219" r="0.6" fill-opacity="0.5"/><circle cx="32" cy="570" r="0.6" fill-opacity="0.26"/><circle cx="38" cy="740" r="0.9" fill-opacity="0.71"/><circle cx="520" cy="279" r="0.5" fill-opacity="0.42"/><circle cx="778" cy="106" r="0.7" fill-opacity="0.38"/><circle cx="520" cy="699" r="0.55" fill-opacity="0.33"/><circle cx="627" cy="137" r="0.7" fill-opacity="0.26"/><circle cx="0" cy="68" r="0.7" fill-opacity="0.71"/><circle cx="511" cy="363" r="0.7" fill-opacity="0.47"/><circle cx="668" cy="221" r="0.5" fill-opacity="0.54"/><circle cx="6" cy="198" r="0.6" fill-opacity="0.53"/><circle cx="14" cy="525" r="0.5" fill-opacity="0.27"/><circle cx="1" cy="472" r="0.5" fill-opacity="0.43"/><circle cx="998" cy="733" r="0.55" fill-opacity="0.43"/><circle cx="117" cy="188" r="0.7" fill-opacity="0.3"/><circle cx="140" cy="106" r="0.55" fill-opacity="0.52"/><circle cx="511" cy="741" r="0.55" fill-opacity="0.63"/><circle cx="42" cy="580" r="0.7" fill-opacity="0.71"/><circle cx="39" cy="623" r="0.7" fill-opacity="0.61"/><circle cx="529" cy="614" r="0.5" fill-opacity="0.31"/><circle cx="100" cy="112" r="0.5" fill-opacity="0.25"/><circle cx="528" cy="710" r="0.6" fill-opacity="0.7"/><circle cx="972" cy="598" r="0.7" fill-opacity="0.69"/><circle cx="494" cy="186" r="0.55" fill-opacity="0.42"/><circle cx="926" cy="182" r="0.7" fill-opacity="0.45"/><circle cx="347" cy="5" r="0.5" fill-opacity="0.64"/><circle cx="15" cy="813" r="0.55" fill-opacity="0.73"/><circle cx="15" cy="410" r="0.5" fill-opacity="0.46"/><circle cx="48" cy="221" r="0.7" fill-opacity="0.51"/><circle cx="491" cy="111" r="0.5" fill-opacity="0.37"/><circle cx="483" cy="2" r="0.5" fill-opacity="0.6"/><circle cx="934" cy="162" r="0.7" fill-opacity="0.6"/><circle cx="856" cy="164" r="0.6" fill-opacity="0.58"/><circle cx="624" cy="132" r="0.55" fill-opacity="0.58"/><circle cx="658" cy="178" r="0.5" fill-opacity="0.55"/><circle cx="26" cy="765" r="0.7" fill-opacity="0.61"/><circle cx="123" cy="843" r="0.6" fill-opacity="0.44"/><circle cx="657" cy="178" r="0.5" fill-opacity="0.74"/><circle cx="815" cy="221" r="0.55" fill-opacity="0.62"/><circle cx="350" cy="181" r="0.55" fill-opacity="0.35"/><circle cx="438" cy="222" r="0.6" fill-opacity="0.25"/><circle cx="525" cy="728" r="0.8" fill-opacity="0.87"/><circle cx="509" cy="719" r="0.5" fill-opacity="0.38"/><circle cx="37" cy="832" r="0.55" fill-opacity="0.65"/><circle cx="35" cy="799" r="0.55" fill-opacity="0.45"/><circle cx="975" cy="105" r="0.5" fill-opacity="0.4"/><circle cx="973" cy="255" r="0.5" fill-opacity="0.43"/><circle cx="19" cy="222" r="0.6" fill-opacity="0.5"/><circle cx="529" cy="752" r="0.5" fill-opacity="0.47"/><circle cx="11" cy="181" r="0.7" fill-opacity="0.38"/><circle cx="22" cy="353" r="0.6" fill-opacity="0.63"/><circle cx="334" cy="105" r="0.55" fill-opacity="0.59"/><circle cx="996" cy="604" r="0.55" fill-opacity="0.66"/><circle cx="523" cy="241" r="0.5" fill-opacity="0.69"/><circle cx="28" cy="292" r="1" fill-opacity="0.82"/><circle cx="864" cy="842" r="0.5" fill-opacity="0.73"/><circle cx="729" cy="163" r="0.5" fill-opacity="0.57"/><circle cx="513" cy="431" r="0.6" fill-opacity="0.29"/><circle cx="528" cy="248" r="0.7" fill-opacity="0.68"/><circle cx="788" cy="102" r="0.55" fill-opacity="0.48"/><circle cx="586" cy="103" r="0.7" fill-opacity="0.56"/><circle cx="938" cy="180" r="0.5" fill-opacity="0.46"/><circle cx="689" cy="172" r="0.7" fill-opacity="0.38"/><circle cx="835" cy="224" r="0.5" fill-opacity="0.6"/><circle cx="26" cy="504" r="0.6" fill-opacity="0.49"/><circle cx="805" cy="110" r="0.55" fill-opacity="0.45"/><circle cx="9" cy="311" r="0.5" fill-opacity="0.59"/><circle cx="836" cy="177" r="0.7" fill-opacity="0.42"/><circle cx="519" cy="103" r="0.6" fill-opacity="0.44"/><circle cx="193" cy="100" r="0.55" fill-opacity="0.36"/><circle cx="208" cy="105" r="0.9" fill-opacity="0.61"/><circle cx="25" cy="536" r="0.6" fill-opacity="0.28"/><circle cx="11" cy="470" r="0.55" fill-opacity="0.72"/><circle cx="874" cy="178" r="0.8" fill-opacity="0.85"/><circle cx="511" cy="291" r="0.5" fill-opacity="0.42"/><circle cx="972" cy="530" r="0.5" fill-opacity="0.6"/><circle cx="686" cy="181" r="0.6" fill-opacity="0.42"/><circle cx="19" cy="821" r="0.7" fill-opacity="0.59"/><circle cx="4" cy="672" r="0.5" fill-opacity="0.5"/><circle cx="4" cy="597" r="0.55" fill-opacity="0.57"/><circle cx="997" cy="341" r="0.5" fill-opacity="0.33"/><circle cx="23" cy="722" r="0.5" fill-opacity="0.38"/><circle cx="18" cy="275" r="0.6" fill-opacity="0.27"/><circle cx="754" cy="5" r="0.5" fill-opacity="0.69"/><circle cx="771" cy="188" r="0.5" fill-opacity="0.43"/><circle cx="996" cy="302" r="0.5" fill-opacity="0.71"/><circle cx="36" cy="779" r="0.5" fill-opacity="0.53"/><circle cx="318" cy="104" r="0.6" fill-opacity="0.43"/><circle cx="15" cy="616" r="0.5" fill-opacity="0.41"/><circle cx="888" cy="182" r="0.7" fill-opacity="0.33"/><circle cx="40" cy="264" r="0.5" fill-opacity="0.32"/><circle cx="21" cy="429" r="0.6" fill-opacity="0.28"/><circle cx="17" cy="375" r="0.55" fill-opacity="0.41"/><circle cx="559" cy="101" r="0.7" fill-opacity="0.61"/><circle cx="931" cy="169" r="0.55" fill-opacity="0.3"/><circle cx="1" cy="138" r="0.55" fill-opacity="0.69"/><circle cx="32" cy="184" r="0.6" fill-opacity="0.48"/><circle cx="24" cy="432" r="0.55" fill-opacity="0.28"/><circle cx="32" cy="110" r="0.5" fill-opacity="0.38"/><circle cx="742" cy="181" r="0.7" fill-opacity="0.72"/><circle cx="24" cy="552" r="0.55" fill-opacity="0.52"/><circle cx="768" cy="181" r="0.55" fill-opacity="0.46"/><circle cx="804" cy="223" r="0.55" fill-opacity="0.54"/><circle cx="911" cy="842" r="0.6" fill-opacity="0.69"/><circle cx="30" cy="392" r="0.7" fill-opacity="0.34"/><circle cx="949" cy="177" r="0.55" fill-opacity="0.34"/><circle cx="973" cy="110" r="0.5" fill-opacity="0.5"/><circle cx="846" cy="110" r="0.7" fill-opacity="0.28"/><circle cx="517" cy="689" r="0.9" fill-opacity="0.62"/><circle cx="82" cy="104" r="0.55" fill-opacity="0.73"/><circle cx="233" cy="108" r="0.7" fill-opacity="0.68"/><circle cx="3" cy="7" r="0.7" fill-opacity="0.65"/><circle cx="791" cy="112" r="0.5" fill-opacity="0.47"/><circle cx="855" cy="170" r="0.7" fill-opacity="0.55"/><circle cx="510" cy="406" r="0.9" fill-opacity="0.89"/><circle cx="993" cy="67" r="0.7" fill-opacity="0.38"/><circle cx="21" cy="630" r="0.5" fill-opacity="0.72"/><circle cx="198" cy="6" r="0.55" fill-opacity="0.56"/><circle cx="40" cy="414" r="0.55" fill-opacity="0.45"/><circle cx="56" cy="222" r="0.6" fill-opacity="0.66"/><circle cx="18" cy="622" r="0.5" fill-opacity="0.5"/><circle cx="517" cy="377" r="0.6" fill-opacity="0.32"/><circle cx="995" cy="580" r="0.6" fill-opacity="0.71"/><circle cx="476" cy="108" r="1" fill-opacity="0.66"/><circle cx="685" cy="177" r="0.5" fill-opacity="0.52"/><circle cx="431" cy="104" r="0.5" fill-opacity="0.74"/><circle cx="70" cy="102" r="0.6" fill-opacity="0.53"/><circle cx="25" cy="360" r="0.55" fill-opacity="0.66"/><circle cx="512" cy="700" r="0.6" fill-opacity="0.7"/><circle cx="750" cy="164" r="0.7" fill-opacity="0.64"/><circle cx="38" cy="590" r="0.7" fill-opacity="0.42"/><circle cx="528" cy="436" r="0.55" fill-opacity="0.39"/><circle cx="997" cy="682" r="0.7" fill-opacity="0.41"/><circle cx="527" cy="243" r="0.7" fill-opacity="0.36"/><circle cx="3" cy="221" r="0.55" fill-opacity="0.68"/><circle cx="18" cy="671" r="0.55" fill-opacity="0.49"/><circle cx="18" cy="400" r="0.6" fill-opacity="0.51"/><circle cx="997" cy="41" r="0.7" fill-opacity="0.62"/><circle cx="730" cy="103" r="0.5" fill-opacity="0.61"/><circle cx="767" cy="162" r="0.7" fill-opacity="0.4"/><circle cx="15" cy="484" r="0.7" fill-opacity="0.65"/><circle cx="661" cy="165" r="0.7" fill-opacity="0.74"/><circle cx="996" cy="579" r="0.6" fill-opacity="0.54"/><circle cx="526" cy="532" r="0.55" fill-opacity="0.71"/><circle cx="518" cy="332" r="0.55" fill-opacity="0.56"/><circle cx="41" cy="722" r="0.7" fill-opacity="0.71"/><circle cx="973" cy="470" r="0.6" fill-opacity="0.66"/><circle cx="38" cy="238" r="0.55" fill-opacity="0.49"/><circle cx="662" cy="105" r="0.6" fill-opacity="0.65"/><circle cx="491" cy="181" r="0.55" fill-opacity="0.3"/><circle cx="526" cy="252" r="0.55" fill-opacity="0.75"/><circle cx="168" cy="183" r="0.55" fill-opacity="0.29"/><circle cx="522" cy="351" r="0.7" fill-opacity="0.49"/><circle cx="796" cy="181" r="0.7" fill-opacity="0.64"/><circle cx="669" cy="177" r="1" fill-opacity="0.73"/><circle cx="911" cy="167" r="0.5" fill-opacity="0.41"/><circle cx="103" cy="220" r="0.55" fill-opacity="0.55"/><circle cx="988" cy="132" r="0.6" fill-opacity="0.35"/><circle cx="41" cy="267" r="0.7" fill-opacity="0.72"/><circle cx="682" cy="187" r="0.7" fill-opacity="0.52"/><circle cx="31" cy="276" r="0.5" fill-opacity="0.57"/><circle cx="516" cy="520" r="0.5" fill-opacity="0.33"/><circle cx="24" cy="183" r="0.6" fill-opacity="0.71"/><circle cx="561" cy="105" r="0.5" fill-opacity="0.4"/><circle cx="25" cy="422" r="0.6" fill-opacity="0.42"/><circle cx="608" cy="184" r="0.55" fill-opacity="0.51"/><circle cx="591" cy="113" r="0.7" fill-opacity="0.56"/><circle cx="6" cy="572" r="0.6" fill-opacity="0.45"/><circle cx="520" cy="279" r="0.6" fill-opacity="0.34"/><circle cx="104" cy="101" r="0.7" fill-opacity="0.41"/><circle cx="33" cy="674" r="0.5" fill-opacity="0.48"/><circle cx="283" cy="222" r="0.55" fill-opacity="0.72"/><circle cx="768" cy="109" r="0.55" fill-opacity="0.45"/><circle cx="518" cy="765" r="0.7" fill-opacity="0.7"/><circle cx="972" cy="759" r="0.55" fill-opacity="0.69"/><circle cx="23" cy="412" r="0.5" fill-opacity="0.67"/><circle cx="526" cy="274" r="0.7" fill-opacity="0.41"/><circle cx="38" cy="453" r="0.6" fill-opacity="0.69"/><circle cx="5" cy="225" r="0.55" fill-opacity="0.62"/><circle cx="973" cy="222" r="0.7" fill-opacity="0.41"/><circle cx="995" cy="484" r="0.55" fill-opacity="0.46"/><circle cx="997" cy="559" r="0.5" fill-opacity="0.42"/><circle cx="994" cy="499" r="0.6" fill-opacity="0.61"/><circle cx="16" cy="223" r="0.5" fill-opacity="0.64"/><circle cx="525" cy="338" r="0.7" fill-opacity="0.49"/><circle cx="511" cy="560" r="0.5" fill-opacity="0.59"/><circle cx="522" cy="809" r="0.7" fill-opacity="0.6"/><circle cx="535" cy="99" r="0.5" fill-opacity="0.68"/><circle cx="758" cy="185" r="0.5" fill-opacity="0.59"/><circle cx="12" cy="221" r="0.7" fill-opacity="0.47"/><circle cx="20" cy="515" r="0.5" fill-opacity="0.57"/><circle cx="38" cy="733" r="0.55" fill-opacity="0.45"/><circle cx="263" cy="844" r="0.55" fill-opacity="0.67"/><circle cx="1" cy="365" r="0.6" fill-opacity="0.7"/><circle cx="473" cy="105" r="0.7" fill-opacity="0.28"/><circle cx="34" cy="224" r="0.6" fill-opacity="0.58"/><circle cx="759" cy="223" r="0.55" fill-opacity="0.68"/><circle cx="5" cy="823" r="0.6" fill-opacity="0.4"/><circle cx="995" cy="388" r="0.5" fill-opacity="0.68"/><circle cx="2" cy="360" r="0.55" fill-opacity="0.29"/><circle cx="718" cy="177" r="0.7" fill-opacity="0.54"/><circle cx="998" cy="317" r="0.7" fill-opacity="0.3"/><circle cx="990" cy="181" r="0.6" fill-opacity="0.27"/><circle cx="378" cy="6" r="0.7" fill-opacity="0.41"/><circle cx="892" cy="183" r="0.6" fill-opacity="0.7"/><circle cx="840" cy="172" r="0.6" fill-opacity="0.33"/><circle cx="519" cy="473" r="0.7" fill-opacity="0.31"/><circle cx="16" cy="566" r="0.5" fill-opacity="0.66"/><circle cx="424" cy="220" r="0.6" fill-opacity="0.39"/><circle cx="41" cy="757" r="0.5" fill-opacity="0.66"/><circle cx="977" cy="170" r="0.7" fill-opacity="0.29"/><circle cx="35" cy="842" r="0.5" fill-opacity="0.64"/><circle cx="807" cy="221" r="0.7" fill-opacity="0.25"/><circle cx="802" cy="181" r="0.7" fill-opacity="0.37"/><circle cx="365" cy="105" r="0.8" fill-opacity="0.75"/><circle cx="144" cy="220" r="0.6" fill-opacity="0.48"/><circle cx="971" cy="840" r="0.7" fill-opacity="0.53"/><circle cx="51" cy="844" r="0.55" fill-opacity="0.52"/><circle cx="973" cy="273" r="0.5" fill-opacity="0.73"/><circle cx="157" cy="24" r="0.55" fill-opacity="0.5"/><circle cx="496" cy="4" r="0.55" fill-opacity="0.62"/><circle cx="769" cy="8" r="0.55" fill-opacity="0.65"/><circle cx="41" cy="323" r="1" fill-opacity="0.83"/><circle cx="384" cy="110" r="0.7" fill-opacity="0.71"/><circle cx="513" cy="254" r="0.55" fill-opacity="0.39"/><circle cx="746" cy="107" r="0.55" fill-opacity="0.51"/><circle cx="275" cy="112" r="0.7" fill-opacity="0.52"/><circle cx="3" cy="421" r="0.5" fill-opacity="0.48"/><circle cx="305" cy="187" r="0.7" fill-opacity="0.49"/><circle cx="42" cy="672" r="0.5" fill-opacity="0.66"/><circle cx="198" cy="220" r="0.55" fill-opacity="0.66"/><circle cx="508" cy="474" r="0.5" fill-opacity="0.64"/><circle cx="578" cy="4" r="0.5" fill-opacity="0.46"/><circle cx="763" cy="180" r="0.5" fill-opacity="0.34"/><circle cx="720" cy="174" r="0.7" fill-opacity="0.47"/><circle cx="995" cy="652" r="0.55" fill-opacity="0.51"/><circle cx="5" cy="294" r="0.5" fill-opacity="0.29"/><circle cx="29" cy="474" r="0.7" fill-opacity="0.71"/><circle cx="8" cy="468" r="0.5" fill-opacity="0.61"/><circle cx="672" cy="170" r="0.5" fill-opacity="0.34"/><circle cx="17" cy="564" r="0.6" fill-opacity="0.69"/><circle cx="508" cy="353" r="0.55" fill-opacity="0.66"/><circle cx="948" cy="844" r="0.6" fill-opacity="0.68"/><circle cx="352" cy="111" r="0.7" fill-opacity="0.41"/><circle cx="4" cy="410" r="0.55" fill-opacity="0.59"/><circle cx="986" cy="168" r="0.6" fill-opacity="0.66"/><circle cx="972" cy="388" r="0.5" fill-opacity="0.57"/><circle cx="259" cy="185" r="0.5" fill-opacity="0.26"/><circle cx="666" cy="162" r="0.7" fill-opacity="0.71"/><circle cx="247" cy="223" r="0.6" fill-opacity="0.35"/><circle cx="511" cy="364" r="0.6" fill-opacity="0.49"/><circle cx="524" cy="357" r="0.7" fill-opacity="0.68"/><circle cx="1" cy="578" r="0.5" fill-opacity="0.51"/><circle cx="403" cy="844" r="0.55" fill-opacity="0.74"/><circle cx="882" cy="167" r="0.7" fill-opacity="0.42"/><circle cx="14" cy="336" r="0.6" fill-opacity="0.47"/><circle cx="435" cy="107" r="0.5" fill-opacity="0.64"/><circle cx="509" cy="811" r="0.6" fill-opacity="0.64"/><circle cx="1" cy="731" r="0.6" fill-opacity="0.29"/><circle cx="156" cy="221" r="0.7" fill-opacity="0.49"/><circle cx="512" cy="114" r="0.5" fill-opacity="0.55"/><circle cx="12" cy="490" r="0.7" fill-opacity="0.28"/><circle cx="20" cy="357" r="0.5" fill-opacity="0.47"/><circle cx="16" cy="375" r="0.5" fill-opacity="0.72"/><circle cx="574" cy="224" r="0.7" fill-opacity="0.58"/><circle cx="22" cy="450" r="0.55" fill-opacity="0.61"/><circle cx="875" cy="162" r="0.5" fill-opacity="0.47"/><circle cx="995" cy="445" r="0.5" fill-opacity="0.43"/><circle cx="213" cy="110" r="0.5" fill-opacity="0.74"/><circle cx="10" cy="709" r="0.55" fill-opacity="0.69"/><circle cx="333" cy="103" r="0.7" fill-opacity="0.41"/><circle cx="34" cy="291" r="0.5" fill-opacity="0.49"/><circle cx="793" cy="221" r="0.5" fill-opacity="0.43"/><circle cx="170" cy="843" r="0.5" fill-opacity="0.73"/><circle cx="9" cy="493" r="0.5" fill-opacity="0.35"/><circle cx="23" cy="456" r="0.6" fill-opacity="0.36"/><circle cx="593" cy="100" r="0.5" fill-opacity="0.46"/><circle cx="633" cy="110" r="0.55" fill-opacity="0.55"/><circle cx="5" cy="92" r="0.6" fill-opacity="0.62"/><circle cx="519" cy="311" r="0.55" fill-opacity="0.55"/><circle cx="522" cy="721" r="0.5" fill-opacity="0.29"/><circle cx="970" cy="175" r="0.55" fill-opacity="0.3"/><circle cx="23" cy="760" r="0.55" fill-opacity="0.54"/><circle cx="842" cy="104" r="0.6" fill-opacity="0.51"/><circle cx="0" cy="355" r="0.6" fill-opacity="0.41"/><circle cx="20" cy="694" r="0.55" fill-opacity="0.29"/><circle cx="518" cy="654" r="0.5" fill-opacity="0.7"/><circle cx="11" cy="257" r="0.6" fill-opacity="0.62"/><circle cx="923" cy="167" r="0.5" fill-opacity="0.54"/><circle cx="312" cy="187" r="0.5" fill-opacity="0.75"/><circle cx="406" cy="113" r="0.6" fill-opacity="0.29"/><circle cx="520" cy="304" r="0.5" fill-opacity="0.62"/><circle cx="77" cy="110" r="0.55" fill-opacity="0.58"/><circle cx="586" cy="104" r="1" fill-opacity="0.89"/><circle cx="25" cy="366" r="0.6" fill-opacity="0.52"/><circle cx="527" cy="551" r="0.6" fill-opacity="0.58"/><circle cx="896" cy="167" r="0.55" fill-opacity="0.73"/><circle cx="666" cy="103" r="0.6" fill-opacity="0.4"/><circle cx="5" cy="306" r="0.5" fill-opacity="0.65"/><circle cx="484" cy="228" r="0.7" fill-opacity="0.69"/><circle cx="849" cy="104" r="0.6" fill-opacity="0.5"/><circle cx="40" cy="537" r="0.5" fill-opacity="0.39"/><circle cx="700" cy="107" r="0.6" fill-opacity="0.57"/><circle cx="24" cy="684" r="0.55" fill-opacity="0.72"/><circle cx="149" cy="219" r="0.7" fill-opacity="0.57"/><circle cx="15" cy="799" r="0.55" fill-opacity="0.41"/><circle cx="753" cy="112" r="0.6" fill-opacity="0.56"/><circle cx="508" cy="236" r="0.55" fill-opacity="0.31"/><circle cx="584" cy="112" r="0.6" fill-opacity="0.53"/><circle cx="4" cy="462" r="0.6" fill-opacity="0.28"/><circle cx="485" cy="436" r="0.6" fill-opacity="0.7"/><circle cx="39" cy="805" r="0.55" fill-opacity="0.6"/><circle cx="971" cy="775" r="0.5" fill-opacity="0.6"/><circle cx="471" cy="111" r="0.8" fill-opacity="0.89"/><circle cx="8" cy="812" r="0.7" fill-opacity="0.25"/><circle cx="552" cy="185" r="0.9" fill-opacity="0.81"/><circle cx="25" cy="796" r="0.55" fill-opacity="0.32"/><circle cx="605" cy="183" r="0.6" fill-opacity="0.3"/><circle cx="607" cy="186" r="0.55" fill-opacity="0.29"/><circle cx="486" cy="804" r="0.7" fill-opacity="0.57"/><circle cx="36" cy="279" r="0.6" fill-opacity="0.6"/><circle cx="642" cy="843" r="0.7" fill-opacity="0.72"/><circle cx="31" cy="236" r="0.6" fill-opacity="0.68"/><circle cx="0" cy="101" r="0.6" fill-opacity="0.31"/><circle cx="989" cy="110" r="0.5" fill-opacity="0.72"/><circle cx="619" cy="136" r="0.5" fill-opacity="0.29"/><circle cx="2" cy="712" r="0.7" fill-opacity="0.51"/><circle cx="997" cy="325" r="0.7" fill-opacity="0.44"/><circle cx="41" cy="516" r="0.6" fill-opacity="0.63"/><circle cx="833" cy="844" r="0.55" fill-opacity="0.6"/><circle cx="557" cy="187" r="0.5" fill-opacity="0.74"/><circle cx="513" cy="364" r="0.55" fill-opacity="0.66"/><circle cx="809" cy="110" r="0.9" fill-opacity="0.93"/><circle cx="923" cy="106" r="0.7" fill-opacity="0.35"/><circle cx="516" cy="289" r="0.9" fill-opacity="0.8"/><circle cx="30" cy="573" r="0.5" fill-opacity="0.49"/><circle cx="509" cy="670" r="0.5" fill-opacity="0.63"/><circle cx="690" cy="112" r="0.55" fill-opacity="0.74"/><circle cx="304" cy="111" r="0.7" fill-opacity="0.64"/><circle cx="912" cy="177" r="0.6" fill-opacity="0.46"/><circle cx="987" cy="160" r="0.7" fill-opacity="0.4"/><circle cx="38" cy="291" r="0.6" fill-opacity="0.52"/><circle cx="565" cy="112" r="0.6" fill-opacity="0.53"/><circle cx="34" cy="699" r="0.7" fill-opacity="0.39"/><circle cx="972" cy="340" r="0.55" fill-opacity="0.44"/><circle cx="5" cy="677" r="0.5" fill-opacity="0.48"/><circle cx="744" cy="221" r="0.55" fill-opacity="0.62"/><circle cx="39" cy="725" r="0.7" fill-opacity="0.56"/><circle cx="24" cy="778" r="0.6" fill-opacity="0.29"/><circle cx="40" cy="708" r="0.7" fill-opacity="0.26"/><circle cx="198" cy="220" r="0.7" fill-opacity="0.43"/><circle cx="513" cy="568" r="0.9" fill-opacity="0.65"/><circle cx="252" cy="2" r="0.55" fill-opacity="0.46"/><circle cx="262" cy="112" r="0.6" fill-opacity="0.54"/><circle cx="628" cy="108" r="0.5" fill-opacity="0.26"/><circle cx="972" cy="468" r="0.5" fill-opacity="0.54"/><circle cx="834" cy="842" r="0.5" fill-opacity="0.66"/><circle cx="997" cy="168" r="0.8" fill-opacity="0.95"/><circle cx="956" cy="159" r="0.7" fill-opacity="0.61"/><circle cx="32" cy="822" r="0.9" fill-opacity="0.89"/><circle cx="525" cy="707" r="0.6" fill-opacity="0.37"/><circle cx="14" cy="837" r="0.7" fill-opacity="0.67"/><circle cx="13" cy="389" r="0.7" fill-opacity="0.61"/><circle cx="16" cy="498" r="0.8" fill-opacity="0.72"/><circle cx="563" cy="103" r="0.6" fill-opacity="0.26"/><circle cx="74" cy="220" r="0.7" fill-opacity="0.74"/><circle cx="511" cy="607" r="0.55" fill-opacity="0.35"/><circle cx="959" cy="220" r="0.55" fill-opacity="0.57"/><circle cx="995" cy="578" r="0.55" fill-opacity="0.57"/><circle cx="498" cy="113" r="0.7" fill-opacity="0.44"/><circle cx="486" cy="270" r="0.5" fill-opacity="0.46"/><circle cx="744" cy="181" r="0.5" fill-opacity="0.49"/><circle cx="11" cy="245" r="0.55" fill-opacity="0.37"/><circle cx="878" cy="185" r="0.6" fill-opacity="0.72"/><circle cx="320" cy="843" r="0.7" fill-opacity="0.63"/><circle cx="971" cy="794" r="0.5" fill-opacity="0.47"/><circle cx="129" cy="187" r="0.6" fill-opacity="0.36"/><circle cx="447" cy="107" r="0.55" fill-opacity="0.35"/><circle cx="314" cy="2" r="0.7" fill-opacity="0.44"/><circle cx="58" cy="222" r="0.5" fill-opacity="0.3"/><circle cx="5" cy="627" r="0.7" fill-opacity="0.34"/><circle cx="806" cy="177" r="0.7" fill-opacity="0.55"/><circle cx="24" cy="330" r="0.55" fill-opacity="0.66"/><circle cx="379" cy="112" r="0.6" fill-opacity="0.42"/><circle cx="854" cy="843" r="0.5" fill-opacity="0.35"/><circle cx="267" cy="111" r="0.7" fill-opacity="0.69"/><circle cx="526" cy="342" r="0.5" fill-opacity="0.36"/><circle cx="859" cy="171" r="0.7" fill-opacity="0.64"/><circle cx="161" cy="111" r="0.5" fill-opacity="0.42"/><circle cx="232" cy="185" r="0.7" fill-opacity="0.61"/><circle cx="21" cy="669" r="0.5" fill-opacity="0.69"/><circle cx="40" cy="680" r="0.7" fill-opacity="0.4"/><circle cx="994" cy="108" r="0.55" fill-opacity="0.48"/><circle cx="520" cy="449" r="0.55" fill-opacity="0.37"/><circle cx="640" cy="165" r="0.6" fill-opacity="0.37"/><circle cx="944" cy="167" r="0.6" fill-opacity="0.71"/><circle cx="159" cy="16" r="0.8" fill-opacity="0.68"/><circle cx="24" cy="243" r="0.55" fill-opacity="0.74"/><circle cx="719" cy="223" r="0.6" fill-opacity="0.44"/><circle cx="512" cy="576" r="0.6" fill-opacity="0.46"/><circle cx="818" cy="111" r="0.9" fill-opacity="0.73"/><circle cx="33" cy="799" r="0.7" fill-opacity="0.38"/><circle cx="879" cy="178" r="0.7" fill-opacity="0.47"/><circle cx="519" cy="752" r="0.6" fill-opacity="0.36"/><circle cx="983" cy="112" r="0.5" fill-opacity="0.47"/><circle cx="996" cy="266" r="0.6" fill-opacity="0.68"/><circle cx="27" cy="278" r="0.6" fill-opacity="0.64"/><circle cx="274" cy="105" r="0.6" fill-opacity="0.4"/><circle cx="838" cy="174" r="0.55" fill-opacity="0.37"/><circle cx="33" cy="572" r="0.7" fill-opacity="0.63"/><circle cx="34" cy="354" r="0.55" fill-opacity="0.57"/><circle cx="888" cy="104" r="0.6" fill-opacity="0.41"/><circle cx="83" cy="107" r="0.5" fill-opacity="0.45"/><circle cx="4" cy="639" r="0.8" fill-opacity="0.73"/><circle cx="485" cy="518" r="0.7" fill-opacity="0.46"/><circle cx="31" cy="348" r="0.7" fill-opacity="0.4"/><circle cx="14" cy="320" r="1" fill-opacity="0.76"/><circle cx="510" cy="441" r="0.8" fill-opacity="0.75"/><circle cx="617" cy="4" r="0.55" fill-opacity="0.41"/><circle cx="27" cy="499" r="0.7" fill-opacity="0.62"/><circle cx="419" cy="110" r="0.8" fill-opacity="0.87"/><circle cx="28" cy="386" r="0.5" fill-opacity="0.4"/><circle cx="726" cy="180" r="0.55" fill-opacity="0.74"/><circle cx="725" cy="220" r="0.55" fill-opacity="0.63"/><circle cx="972" cy="294" r="0.7" fill-opacity="0.68"/><circle cx="637" cy="160" r="0.5" fill-opacity="0.56"/><circle cx="22" cy="262" r="0.6" fill-opacity="0.27"/><circle cx="20" cy="730" r="0.7" fill-opacity="0.26"/><circle cx="41" cy="419" r="0.55" fill-opacity="0.36"/><circle cx="996" cy="688" r="0.55" fill-opacity="0.42"/><circle cx="508" cy="641" r="0.6" fill-opacity="0.25"/><circle cx="973" cy="792" r="0.55" fill-opacity="0.58"/><circle cx="508" cy="666" r="0.7" fill-opacity="0.35"/><circle cx="35" cy="771" r="0.7" fill-opacity="0.58"/><circle cx="14" cy="714" r="0.55" fill-opacity="0.54"/><circle cx="687" cy="164" r="0.7" fill-opacity="0.29"/><circle cx="916" cy="166" r="0.55" fill-opacity="0.58"/><circle cx="997" cy="444" r="0.6" fill-opacity="0.3"/><circle cx="304" cy="183" r="0.55" fill-opacity="0.73"/><circle cx="731" cy="177" r="0.7" fill-opacity="0.38"/><circle cx="620" cy="6" r="0.8" fill-opacity="0.91"/><circle cx="18" cy="364" r="0.55" fill-opacity="0.6"/><circle cx="3" cy="604" r="0.5" fill-opacity="0.58"/><circle cx="434" cy="100" r="0.55" fill-opacity="0.39"/><circle cx="39" cy="765" r="0.7" fill-opacity="0.42"/><circle cx="443" cy="187" r="0.55" fill-opacity="0.7"/><circle cx="814" cy="843" r="0.5" fill-opacity="0.67"/><circle cx="963" cy="106" r="0.5" fill-opacity="0.26"/><circle cx="22" cy="583" r="0.6" fill-opacity="0.55"/><circle cx="229" cy="223" r="0.6" fill-opacity="0.25"/><circle cx="715" cy="100" r="0.8" fill-opacity="0.75"/><circle cx="528" cy="809" r="0.55" fill-opacity="0.32"/><circle cx="524" cy="808" r="0.6" fill-opacity="0.48"/><circle cx="525" cy="749" r="0.55" fill-opacity="0.6"/><circle cx="32" cy="103" r="0.7" fill-opacity="0.75"/><circle cx="524" cy="220" r="0.5" fill-opacity="0.32"/><circle cx="534" cy="110" r="0.5" fill-opacity="0.31"/><circle cx="521" cy="710" r="0.9" fill-opacity="0.82"/><circle cx="73" cy="105" r="0.6" fill-opacity="0.35"/></svg>
<div class="a topbar"></div>
<div class="a blk" style="left:5px;top:2px;width:150px;height:98px"></div>
<div class="a blk" style="left:770px;top:2px;width:219px;height:98px"></div>
<svg class="a" style="left:0;top:0" width="160" height="50" viewBox="0 0 160 50">
<g fill="none" stroke="url(#lg)" stroke-width="4" stroke-linejoin="round">
 <path d="M35,14.8 H19.8 Q16.9,14.8 16.9,17.7 V22.3 Q16.9,25 19.7,25.9 L33,30.1 Q35.2,30.9 35.2,33.5 V39.8 H14.5"/>
 <path d="M38.4,26 H46"/>
 <path d="M42.6,41.6 V21" stroke-width="3.6"/>
 <path d="M49.8,28.2 Q50.2,25.2 53.8,25.2 Q57.9,25.2 57.9,28.8 V41.6" stroke-width="3.6"/>
 <path d="M57,30.6 L51.8,33.6 Q50.2,34.6 50.2,37 Q50.2,39.9 53,39.9 H58" stroke-width="3.2"/>
 <path d="M64,41.6 V28.5 Q64,25.3 67.2,25.3 H71.7" stroke-width="3.6"/>
 <path d="M77.8,42 V14.6 H90.5"/><path d="M89,12.7 H92.5 L91,16.5 H89Z" fill="url(#lg)" stroke="none"/>
 <path d="M79.5,25.2 H87.6" stroke-width="3.3"/>
 <ellipse cx="97.6" cy="32.45" rx="6.1" ry="8.2"/>
 <path d="M109.6,42 V28 Q109.6,24.4 113,24.4 H118" stroke-width="3.6"/>
 <path d="M130.8,24.3 H127 Q121.1,24.3 121.1,30.5 V34.4 Q121.1,40.6 127,40.6 H130.8"/>
 <path d="M145.5,24.3 H141 Q135.2,24.3 135.2,30.5 V34.4 Q135.2,40.6 141,40.6 H146.5"/>
 <path d="M144.8,25.5 L138.8,35" stroke-width="3"/>
</g>
<path d="M40.6,22 L44.4,19 V24 H40.6Z" fill="#6050ff"/>
</svg>
<div class="btn" style="left:37px;top:54px;width:82px;height:25px;line-height:24px">End Turn</div>
<div class="a" style="left:37px;top:85px;font-size:12px;color:#f0f000;text-decoration:underline">Return to Lobby</div>
<div class="a blk" style="left:160px;top:7px;width:606px;height:90px;border:1px solid #fff"></div>
<div class="a info" style="left:168px;top:20px">Alpha Test Two</div>
<div class="a info" style="left:415px;top:20px">PRIVATE</div>
<div class="a info" style="left:512px;top:20px">Turn: 69</div>
<div class="a info" style="left:636px;top:20px">30:49:02</div>
<div class="a info" style="left:168px;top:55px;line-height:15px;width:590px"><span class="g">SFC (steamgirlirene)</span>, Earth (steamgirlirene), <span class="g">Atakcia (tomtomhotep)</span>, <span class="g">ExoFaun (tomtomhotep)</span>,<br>Consortium (tomtomhotep)</div>
<div class="btn" style="left:827px;top:25px;width:102px;height:25px;line-height:24px">Leave Game</div>
<div class="btn" style="left:807px;top:54px;width:145px;height:25px;line-height:24px">Save Game and Quit</div>
<div class="a blk" style="left:12px;top:114px;width:604px;height:66px;border:1px solid #f0f0f0"></div>
<div class="a stat" style="left:26px;top:129px">governmental support</div>
<div class="a stat" style="left:222px;top:129px">scientific resources</div>
<div class="a stat" style="left:26px;top:152px">economic power</div>
<div class="a stat" style="left:222px;top:152px">tactical resources</div>
<div class="a stat" style="left:135px;top:129px;width:60px;text-align:right">26879</div>
<div class="a stat" style="left:312px;top:129px;width:60px;text-align:right">35492</div>
<div class="a stat" style="left:135px;top:152px;width:60px;text-align:right">135481</div>
<div class="a stat" style="left:312px;top:152px;width:60px;text-align:right">39900</div>
<div class="a sg" style="left:419px;top:140px">business relationship&nbsp;&nbsp; 445224</div>
<div class="a blk" style="left:628px;top:113px;width:352px;height:45px"></div>
<div class="a" style="left:632px;top:119px;width:345px;height:31px;border:1px solid #f0f000;background:#383838"></div>
<div class="a yel" style="left:638px;top:126px;font-size:15.7px">Chat Window</div>
<svg class="a" style="left:921px;top:129px" width="14" height="11"><path d="M7 0L13.5 10.5H0.5Z" fill="#f0f000"/></svg>
<div class="a" style="left:10px;top:188px;width:986px;height:31px;border:1px solid #00dada;background:#000030"></div>
<div class="a yel" style="left:10px;top:192px;width:986px;text-align:center;font-size:19.2px;font-weight:bold">Atakcian Mining Consortium</div>
<svg class="a" style="left:18px;top:275px" width="14" height="16"><rect x="1" y="1.5" width="12" height="2" fill="#f0f000"/><path d="M7 3.5L13 14H1Z" fill="#f0f000"/></svg>
<svg class="a" style="left:18px;top:313px" width="14" height="32"><path d="M7 1L13 11H9.5V21H13L7 31L1 21H4.5V11H1Z" fill="#f0f000"/></svg>
<div class="a blk" style="left:42px;top:224px;width:442px;height:618px;border-left:1px solid #fff;border-right:1px solid #fff"></div>
<div class="frame" style="left:51px;top:226px;width:424px;height:168px"></div>
<svg class="a" style="left:60px;top:235px;opacity:0.14;" width="100" height="150"><use href="#card"/></svg>
<div class="a lp" style="left:188px;top:235px"><span class="yel" style="font-size:15.6px;line-height:19.5px">MO2-683</span><br>planetary infrastructure: <b>210</b><br>civilization development: <b>6 (agrarian)</b><br>defensive strength: <b>12</b><br>diplomatic affinity for Earth: <b>7</b><br>diplomatic affinity for Atakcia: <b>16</b><br>Luminite deposits: <b>7000</b><br><span class="r">Mining Operations: None</span><br><span class="r">Civilization Status: Safe</span></div>
<div class="frame" style="left:51px;top:397px;width:424px;height:168px"></div>
<svg class="a" style="left:60px;top:406px;" width="100" height="150"><use href="#card"/></svg>
<div class="a lp" style="left:188px;top:406px"><span class="yel" style="font-size:15.6px;line-height:19.5px">MP5-072</span><br>planetary infrastructure: <b>160</b><br>civilization development: <b>8 (agrarian)</b><br>defensive strength: <b>10</b><br>diplomatic affinity for Earth: <b>11</b><br>diplomatic affinity for Atakcia: <b>1</b><br>Luminite deposits: <b>3000</b><br><span class="r">Mining Operations: None</span><br><span class="r">Civilization Status: Safe</span></div>
<div class="frame" style="left:51px;top:567px;width:424px;height:168px"></div>
<svg class="a" style="left:60px;top:576px;" width="100" height="150"><use href="#card"/></svg>
<div class="a lp" style="left:188px;top:576px"><span class="yel" style="font-size:15.6px;line-height:19.5px">MU3-248</span><br>planetary infrastructure: <b>300</b><br>civilization development: <b>13 (modern)</b><br>defensive strength: <b>17</b><br>diplomatic affinity for Earth: <b>11</b><br>diplomatic affinity for Atakcia: <b>2</b><br>Luminite deposits: <b>15000</b><br><span class="r">Mining Operations: None</span><br><span class="r">Civilization Status: Safe</span></div>
<div class="frame" style="left:51px;top:738px;width:424px;height:168px"></div>
<svg class="a" style="left:60px;top:747px;" width="100" height="150"><use href="#card"/></svg>
<div class="a lp" style="left:188px;top:747px"><span class="yel" style="font-size:15.6px;line-height:19.5px">NF3-853</span><br>planetary infrastructure: <b>280</b><br>civilization development: <b>10 (industrial)</b><br>defensive strength: <b>9</b><br>diplomatic affinity for Earth: <b>11</b><br>diplomatic affinity for Atakcia: <b>17</b></div>
<div class="sb" style="left:486px;top:224px;width:21px;height:618px"></div>
<div class="sbb" style="left:488px;top:225px;height:20px"></div>
<svg class="a" style="left:492px;top:230px" width="10" height="8"><path d="M1,6.5 L5,2.5 L9,6.5" fill="none" stroke="#4d6185" stroke-width="2"/></svg>
<div class="sbb" style="left:488px;top:327px;height:20px"></div>
<svg class="a" style="left:492px;top:331px" width="9" height="10"><path d="M1,1.5H8M1,3.5H8M1,5.5H8M1,7.5H8" stroke="#8aa4dc" stroke-width="1"/></svg>
<div class="sbb" style="left:488px;top:822px;height:19px"></div>
<svg class="a" style="left:492px;top:828px" width="10" height="8"><path d="M1,1.5 L5,5.5 L9,1.5" fill="none" stroke="#4d6185" stroke-width="2"/></svg>
<div class="a" style="left:529px;top:224px;width:442px;height:31px;border:1px solid #f0f000;background:#383838"></div>
<div class="a yel" style="left:536px;top:231px;font-size:15.7px">Available Missions</div>
<svg class="a" style="left:901px;top:234px" width="14" height="11"><path d="M0.5 0.5H13.5L7 10.5Z" fill="#f0f000"/></svg>
<div class="a blk" style="left:529px;top:257px;width:442px;height:590px;border:1px solid #fff"></div>
<div class="a" style="left:538px;top:264px;width:424px;height:19px;border:1px solid #9a9a9a;background:#000033"></div>
<div class="a yel" style="left:540px;top:266px;font-size:12.6px;text-decoration:underline">Show un-doable missions</div>
<div class="frame" style="left:538px;top:286px;width:424px;height:174px"></div>
<svg class="a" style="left:548px;top:294px" width="98" height="150"><use href="#oval"/></svg>
<svg class="a" style="left:568px;top:324px" width="60" height="44" viewBox="0 0 60 44">
<path d="M10.5,3.9 L20.4,10.5 L21.6,11.7 L28.2,11.1 L37.2,10.8 L39,9 L48,3.6 L56.2,15.9 L45.6,22.2 L46.5,26.4 L44.4,31.2 L41.4,34.8 L35.4,39 L31.2,36.6 L22.8,39.6 L18,33.6 L12,25.2 L13.8,21.6 L2.4,16.5 Z" fill="#e0d6aa" stroke="#c8960e" stroke-width="1.3" stroke-linejoin="round"/>
<path d="M13.8,21.6 Q20,19 26,18 L30.6,17.4 L37.2,18 L44.4,22.8 L45.6,22.2 L46.5,26.4 L44.4,31.2 L41.4,34.8 L35.4,39 L31.2,36.6 L22.8,39.6 L18,33.6 L12,25.2 Z" fill="#e4f0a6"/>
<path d="M2.4,16.5 L10.5,3.9 L20.4,10.5 L21.6,11.7 L28.2,11.1 L37.2,10.8 L39,9 L48,3.6 L56.2,15.9 L45.6,22.2 L46.5,26.4 L44.4,31.2 L41.4,34.8 L35.4,39 L31.2,36.6 L22.8,39.6 L18,33.6 L12,25.2 L13.8,21.6 Z" fill="none" stroke="#c8960e" stroke-width="1.3" stroke-linejoin="round"/>
<path d="M26.4,12.6 Q23.5,18 24.5,20.5 Q26,23.5 28.5,22 Q30,20 30.6,17.4 L37.2,18 L44.4,22.8" fill="none" stroke="#7a7a50" stroke-width="0.9"/>
<g fill="#e4f0a6" stroke="#7a8a40" stroke-width="0.9">
<ellipse cx="16.4" cy="24.2" rx="3.4" ry="1.9" transform="rotate(35 16.4 24.2)"/>
<ellipse cx="19.8" cy="28.4" rx="3.4" ry="1.9" transform="rotate(35 19.8 28.4)"/>
<ellipse cx="22.8" cy="32" rx="3.4" ry="1.9" transform="rotate(35 22.8 32)"/>
<ellipse cx="26" cy="35" rx="3.4" ry="1.9" transform="rotate(35 26 35)"/>
</g></svg>
<div class="a" style="left:548px;top:373px;width:98px;text-align:center;font-size:12px;line-height:14px;color:#1a1a1a">Diplomatic<br>Mission</div>
<div class="a" style="left:677px;top:297px;width:274px;height:44px;background:#383838"></div>
<div class="a yel" style="left:681px;top:301px;font-size:15.6px;line-height:19px">Establish Diplomatic Ties with United<br>Earth Government</div>
<div class="a" style="left:677px;top:341px;width:274px;height:24px;border:1px solid #3c3c3c;border-top:0"></div>
<div class="a" style="left:681px;top:344px;font-size:15.6px;color:#fff">2 hrs.</div>
<div class="a" style="left:676px;top:369px;font-size:15.6px;color:#fff">Location: <b>Earth or Atakcia</b></div>
<div class="a" style="left:677px;top:390px;width:274px;height:21px;background:#383838"></div>
<div class="a" style="left:681px;top:394px;font-size:12.6px;color:#fff">Requirements:</div>
<div class="a" style="left:677px;top:411px;width:274px;height:20px;border:1px solid #3c3c3c;border-top:0"></div>
<div class="a" style="left:681px;top:414px;font-size:12.6px;color:#fff">Requires: 50 governmental support</div>
<div class="a" style="left:675px;top:433px;width:278px;height:17px;border:1px solid #444"></div>
<div class="a" style="left:677px;top:434px;font-size:12.6px;color:#fff">more</div><svg class="a" style="left:712px;top:436px" width="12" height="11"><path d="M0 0H12L6 10.5Z" fill="#f0f000"/></svg>
<div class="frame" style="left:538px;top:463px;width:424px;height:174px"></div>
<svg class="a" style="left:548px;top:471px" width="98" height="150"><use href="#oval"/></svg>
<svg class="a" style="left:585px;top:495px" width="25" height="30" viewBox="0 0 25 30">
<rect x="0.5" y="1.5" width="23.5" height="28" rx="1.5" fill="#b95a0c"/>
<rect x="3" y="3.5" width="18" height="23" fill="#fbfbfb"/>
<rect x="4.5" y="0" width="15" height="4" rx="1" fill="#9a9a9a"/>
<g stroke="#4a5a70" stroke-width="0.9"><path d="M5,7.5 H19 M5,11.5 H19 M5,15.5 H19 M5,19 H8 M5,22.5 H8"/></g>
<circle cx="16" cy="20.5" r="4" fill="#e23030"/><circle cx="16" cy="20.5" r="1.3" fill="#fff"/>
</svg>
<div class="a" style="left:548px;top:538px;width:98px;text-align:center;font-size:12px;line-height:14px;color:#1a1a1a">Beaurocratic<br>Mission</div>
<div class="a" style="left:677px;top:474px;width:274px;height:44px;background:#383838"></div>
<div class="a yel" style="left:681px;top:478px;font-size:15.6px;line-height:19px">Strengthen Communication Channels<br>with Atakcian Government</div>
<div class="a" style="left:677px;top:518px;width:274px;height:24px;border:1px solid #3c3c3c;border-top:0"></div>
<div class="a" style="left:681px;top:521px;font-size:15.6px;color:#fff">2 hrs.</div>
<div class="a" style="left:676px;top:546px;font-size:15.6px;color:#fff">Location: <b>Atakcia</b></div>
<div class="a" style="left:677px;top:567px;width:274px;height:21px;background:#383838"></div>
<div class="a" style="left:681px;top:571px;font-size:12.6px;color:#fff">Requirements:</div>
<div class="a" style="left:677px;top:588px;width:274px;height:20px;border:1px solid #3c3c3c;border-top:0"></div>
<div class="a" style="left:681px;top:591px;font-size:12.6px;color:#fff">Requires: 50 governmental support</div>
<div class="a" style="left:675px;top:610px;width:278px;height:17px;border:1px solid #444"></div>
<div class="a" style="left:677px;top:611px;font-size:12.6px;color:#fff">more</div><svg class="a" style="left:712px;top:613px" width="12" height="11"><path d="M0 0H12L6 10.5Z" fill="#f0f000"/></svg>
<div class="frame" style="left:538px;top:640px;width:424px;height:174px"></div>
<svg class="a" style="left:548px;top:648px" width="98" height="150"><use href="#oval"/></svg>
<svg class="a" style="left:582px;top:683px" width="32" height="30" viewBox="0 0 32 30">
<defs><linearGradient id="cg" x1="0" y1="0" x2="1" y2="0"><stop offset="0" stop-color="#c09a28"/><stop offset="0.5" stop-color="#e8c64c"/><stop offset="1" stop-color="#b8922a"/></linearGradient></defs>
<g stroke="#5e5030" stroke-width="1.1" fill="url(#cg)">
<path d="M0.8,5.2 A6.2,4.6 0 0 1 13.2,5.2 V19.5 A6.2,3.6 0 0 1 0.8,19.5 Z"/>
<path d="M18.3,5.4 A6.2,4.6 0 0 1 30.7,5.4 V18.5 A6.2,3.6 0 0 1 18.3,18.5 Z"/>
<path d="M9.6,8.6 A7.2,5 0 0 1 24,8.6 V25 A7.2,3.8 0 0 1 9.6,25 Z"/>
</g>
<ellipse cx="7" cy="5.6" rx="5.4" ry="3.9" fill="#f6d44a"/>
<ellipse cx="24.5" cy="5.8" rx="5.4" ry="3.9" fill="#f6d44a"/>
<ellipse cx="16.8" cy="9" rx="6.4" ry="4.3" fill="#f8da50"/>
<ellipse cx="16.8" cy="9" rx="3" ry="2" fill="#fbe890"/>
</svg>
<div class="a" style="left:548px;top:720px;width:98px;text-align:center;font-size:12px;line-height:14px;color:#1a1a1a">Economic<br>Mission</div>
<div class="a" style="left:677px;top:651px;width:274px;height:44px;background:#383838"></div>
<div class="a yel" style="left:681px;top:655px;font-size:15.6px;line-height:19px">Strengthen Communication Channels<br>with ExoFaun, Inc</div>
<div class="a" style="left:677px;top:695px;width:274px;height:24px;border:1px solid #3c3c3c;border-top:0"></div>
<div class="a" style="left:681px;top:698px;font-size:15.6px;color:#fff">2 hrs.</div>
<div class="a" style="left:676px;top:723px;font-size:15.6px;color:#fff">Location: <b>ExoFaun</b></div>
<div class="a" style="left:677px;top:744px;width:274px;height:21px;background:#383838"></div>
<div class="a" style="left:681px;top:748px;font-size:12.6px;color:#fff">Requirements:</div>
<div class="a" style="left:677px;top:765px;width:274px;height:20px;border:1px solid #3c3c3c;border-top:0"></div>
<div class="a" style="left:681px;top:768px;font-size:12.6px;color:#fff">Requires: 50 business relationship</div>
<div class="a" style="left:675px;top:787px;width:278px;height:17px;border:1px solid #444"></div>
<div class="a" style="left:677px;top:788px;font-size:12.6px;color:#fff">more</div><svg class="a" style="left:712px;top:790px" width="12" height="11"><path d="M0 0H12L6 10.5Z" fill="#f0f000"/></svg>
<div class="frame" style="left:538px;top:817px;width:424px;height:174px"></div>
<svg class="a" style="left:548px;top:825px" width="98" height="150"><use href="#oval"/></svg>
<div class="a" style="left:548px;top:904px;width:98px;text-align:center;font-size:12px;line-height:14px;color:#1a1a1a">Covert<br>Mission</div>
<div class="a" style="left:677px;top:828px;width:274px;height:44px;background:#383838"></div>
<div class="a yel" style="left:681px;top:832px;font-size:15.6px;line-height:19px">Perform an Espionage Operation<br>x</div>
<div class="a" style="left:677px;top:872px;width:274px;height:24px;border:1px solid #3c3c3c;border-top:0"></div>
<div class="a" style="left:681px;top:875px;font-size:15.6px;color:#fff">2 hrs.</div>
<div class="a" style="left:676px;top:900px;font-size:15.6px;color:#fff">Location: <b></b></div>
<div class="a" style="left:677px;top:921px;width:274px;height:21px;background:#383838"></div>
<div class="a" style="left:681px;top:925px;font-size:12.6px;color:#fff">Requirements:</div>
<div class="a" style="left:677px;top:942px;width:274px;height:20px;border:1px solid #3c3c3c;border-top:0"></div>
<div class="a" style="left:681px;top:945px;font-size:12.6px;color:#fff">Requires: </div>
<div class="a" style="left:675px;top:964px;width:278px;height:17px;border:1px solid #444"></div>
<div class="a" style="left:677px;top:965px;font-size:12.6px;color:#fff">more</div><svg class="a" style="left:712px;top:967px" width="12" height="11"><path d="M0 0H12L6 10.5Z" fill="#f0f000"/></svg>
<div class="sb" style="left:973px;top:224px;width:21px;height:618px"></div>
<div class="sbb" style="left:975px;top:225px;height:20px"></div>
<svg class="a" style="left:979px;top:230px" width="10" height="8"><path d="M1,6.5 L5,2.5 L9,6.5" fill="none" stroke="#4d6185" stroke-width="2"/></svg>
<div class="sbb" style="left:975px;top:247px;height:326px"></div>
<svg class="a" style="left:979px;top:404px" width="9" height="10"><path d="M1,1.5H8M1,3.5H8M1,5.5H8M1,7.5H8" stroke="#aabce8" stroke-width="1"/></svg>
<div class="sbb" style="left:975px;top:822px;height:19px"></div>
<svg class="a" style="left:979px;top:828px" width="10" height="8"><path d="M1,1.5 L5,5.5 L9,1.5" fill="none" stroke="#4d6185" stroke-width="2"/></svg>
<div class="a" style="left:0;top:842px;width:999px;height:2px;background:#05051a"></div>
</body></html>
